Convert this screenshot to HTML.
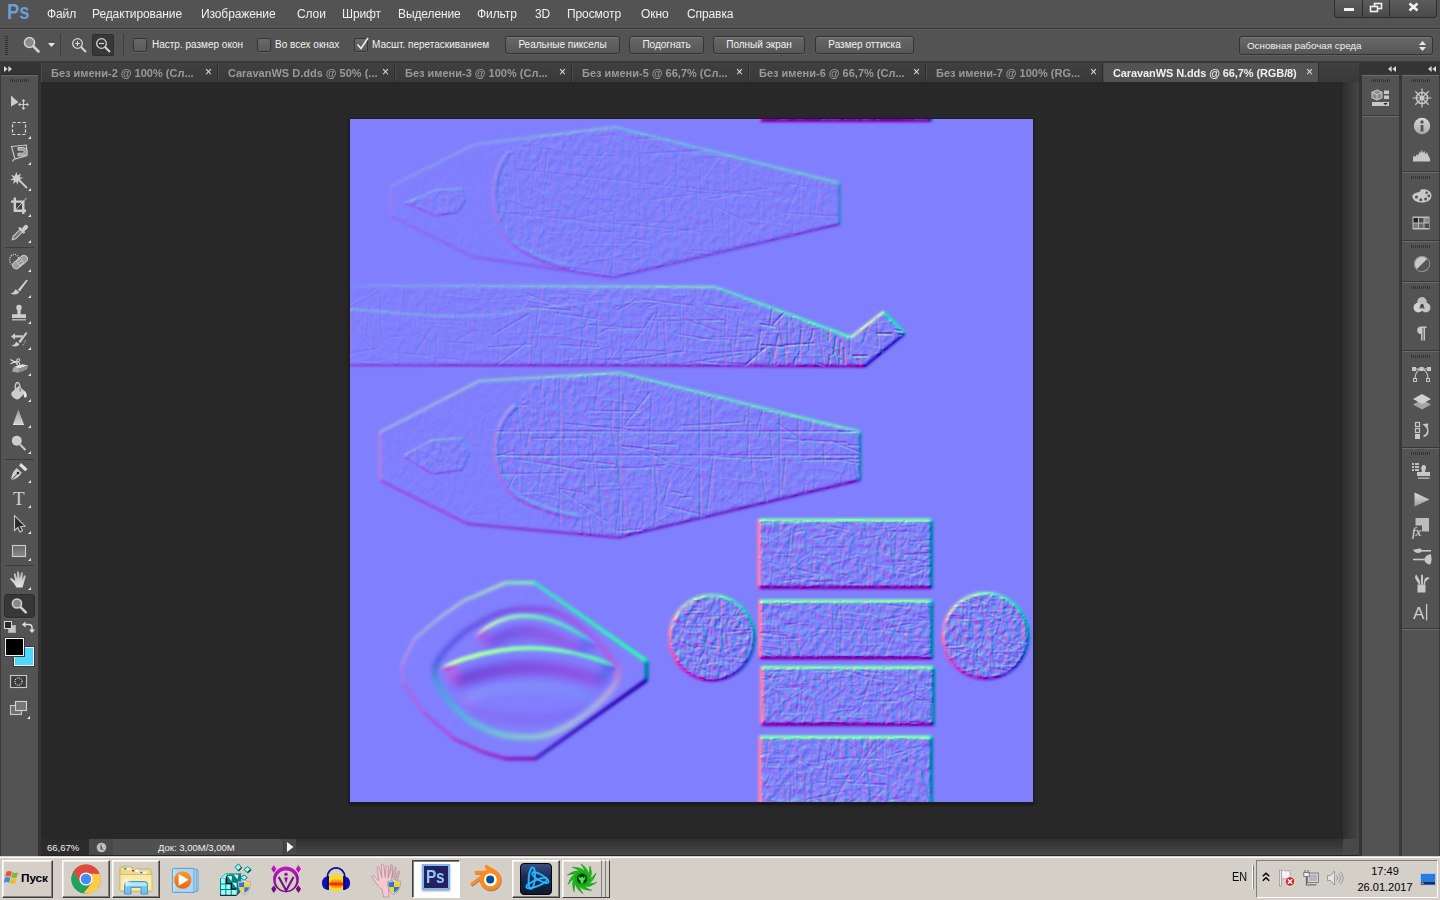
<!DOCTYPE html>
<html lang="ru">
<head>
<meta charset="utf-8">
<title>CaravanWS N.dds @ 66,7% (RGB/8)</title>
<style>
*{box-sizing:border-box;margin:0;padding:0}
html,body{width:1440px;height:900px;overflow:hidden;background:#282828}
body{position:relative;font-family:"Liberation Sans","DejaVu Sans",sans-serif;font-size:11px;color:#e0e0e0;-webkit-font-smoothing:antialiased}
.abs{position:absolute}
/* ---------- menu bar ---------- */
#menubar{position:absolute;left:0;top:0;width:1440px;height:28px;background:#535353}
#menubar .mi{filter:grayscale(1);position:absolute;top:6px;font-size:12px;letter-spacing:-.1px;line-height:16px;color:#f0f0f0;white-space:nowrap}
#pslogo{position:absolute;left:7px;top:-1px;font-size:22px;line-height:26px;font-weight:bold;color:#6c9fd6;transform:scaleX(.84);transform-origin:0 0}
#winctl{position:absolute;left:1334px;top:-1px;width:103px;height:19px;border:1px solid #2d2d2d;border-top:none;border-radius:0 0 4px 4px;background:linear-gradient(#5d5d5d,#4a4a4a)}
#winctl i{position:absolute;top:0;width:1px;height:18px;background:#2d2d2d}
/* ---------- options bar ---------- */
#sep1{position:absolute;left:0;top:28px;width:1440px;height:1px;background:#383838}
#optbar{position:absolute;left:0;top:29px;width:1440px;height:33px;background:#535353;border-top:1px solid #5e5e5e}
#sep2{position:absolute;left:0;top:61px;width:1440px;height:2px;background:#383838}
.cb{position:absolute;top:38px;width:14px;height:14px;border:1px solid #343434;border-radius:2px;background:linear-gradient(#6a6a6a,#595959);box-shadow:0 1px 0 #626262}
.ol{position:absolute;top:38px;font-size:10px;line-height:14px;color:#f2f2f2;white-space:nowrap}
.btn{position:absolute;top:36px;height:18px;border:1px solid #333;border-radius:3px;background:linear-gradient(#686868,#565656);box-shadow:0 1px 0 #5f5f5f, inset 0 1px 0 #777;font-size:10px;line-height:16px;color:#f2f2f2;text-align:center;white-space:nowrap}
/* ---------- tabs ---------- */
#tabbar{position:absolute;left:41px;top:63px;width:1318px;height:19px;background:linear-gradient(#404040,#393939)}
.tab{position:absolute;top:0;height:19px;width:177px;border-right:1px solid #2c2c2c;border-left:1px solid #4a4a4a;font-weight:bold;font-size:11px;line-height:19px;color:#999;white-space:nowrap}
.tab span{filter:grayscale(1);position:absolute;left:9px;top:1px}
.tab b{position:absolute;right:5px;top:0;font-size:12px;color:#e4e4e4;font-weight:normal;filter:grayscale(1)}
.tab.act{background:#535353;color:#f0f0f0;width:216px;letter-spacing:-.1px}
/* ---------- left toolbar ---------- */
#tbhead{position:absolute;left:0;top:63px;width:38px;height:11px;background:#343434}
#toolbar{position:absolute;left:0;top:75px;width:38px;height:781px;background:#535353;border-top:1px solid #6a6a6a}
#tbsep{position:absolute;left:38px;top:63px;width:3px;height:793px;background:#343434}
/* ---------- canvas ---------- */
#canvas{position:absolute;left:41px;top:82px;width:1318px;height:757px;background:#282828}
#vscroll{position:absolute;left:1343px;top:82px;width:16px;height:757px;background:linear-gradient(90deg,#2e2e2e,#464646)}
#statusbar{position:absolute;left:41px;top:839px;width:1318px;height:17px;background:linear-gradient(#2f2f2f,#474747 16px,#222 16px)}
/* ---------- right dock ---------- */
#docksep{position:absolute;left:1359px;top:63px;width:3px;height:793px;background:#343434}
#dockhead{position:absolute;left:1362px;top:63px;width:78px;height:11px;background:#343434}
#dock{position:absolute;left:1362px;top:74px;width:78px;height:782px;background:#383838}
.pn{position:absolute;background:#535353;border-top:1px solid #6a6a6a}
/* ---------- taskbar ---------- */
#taskbar{position:absolute;left:0;top:856px;width:1440px;height:44px;background:#d4d0c8;color:#000}

#taskbar .b3{position:absolute;top:4px;height:38px;width:48px;border:1px solid;border-color:#fff #404040 #404040 #fff;box-shadow:inset -1px -1px 0 #808080,inset 1px 1px 0 #ece9e2}
#taskbar .b3.dn{background:#fff;border-color:#404040 #fff #fff #404040;box-shadow:inset 1px 1px 0 #808080}
#taskbar svg{position:absolute}
</style>
</head>
<body>
<div id="menubar">
<div id="pslogo">Ps</div>
<div class="mi" style="left:47px">Файл</div>
<div class="mi" style="left:92px">Редактирование</div>
<div class="mi" style="left:201px">Изображение</div>
<div class="mi" style="left:297px">Слои</div>
<div class="mi" style="left:342px">Шрифт</div>
<div class="mi" style="left:398px">Выделение</div>
<div class="mi" style="left:477px">Фильтр</div>
<div class="mi" style="left:535px">3D</div>
<div class="mi" style="left:567px">Просмотр</div>
<div class="mi" style="left:641px">Окно</div>
<div class="mi" style="left:687px">Справка</div>
<div id="winctl"><i style="left:27px"></i><i style="left:54px"></i>
<svg class="abs" style="left:0;top:0" width="101" height="18" viewBox="0 0 101 18">
<rect x="9" y="9" width="10" height="3" fill="#f2f2f2"/>
<rect x="39.5" y="4.5" width="7" height="5" fill="none" stroke="#f2f2f2" stroke-width="1.6"/>
<rect x="35.5" y="7.5" width="7" height="5" fill="#555" stroke="#f2f2f2" stroke-width="1.6"/>
<path d="M74.5 4.5l8 7M82.5 4.5l-8 7" stroke="#f2f2f2" stroke-width="2.6" fill="none"/>
</svg></div>
</div><div id="sep1"></div>
<div id="optbar"></div><div id="sep2"></div>
<div class="abs" style="left:5px;top:36px;width:3px;height:19px;background:repeating-linear-gradient(#333 0,#333 1px,transparent 1px,transparent 2px)"></div>
<svg class="abs" style="left:22px;top:35px" width="20" height="20" viewBox="0 0 20 20"><circle cx="7.5" cy="7.5" r="5" fill="#8a8a8a" stroke="#d0d0d0" stroke-width="1.6"/><path d="M11.5 11.5l5 5" stroke="#cfcfcf" stroke-width="2.6" stroke-linecap="round"/></svg>
<svg class="abs" style="left:48px;top:43px" width="7" height="4"><path d="M0 0h7l-3.5 4z" fill="#e8e8e8"/></svg>
<div class="abs" style="left:60px;top:34px;width:1px;height:23px;background:#3e3e3e"></div>
<div class="abs" style="left:92px;top:34px;width:22px;height:22px;background:#383838;border:1px solid #2e2e2e;border-radius:2px"></div>
<svg class="abs" style="left:70px;top:36px" width="20" height="20" viewBox="0 0 20 20"><circle cx="7.5" cy="7.5" r="4.8" fill="none" stroke="#d6d6d6" stroke-width="1.3"/><path d="M5 7.5h5M7.5 5v5" stroke="#d6d6d6" stroke-width="1.2"/><path d="M11 11l5 5" stroke="#d6d6d6" stroke-width="2"/></svg>
<svg class="abs" style="left:94px;top:36px" width="20" height="20" viewBox="0 0 20 20"><circle cx="7.5" cy="7.5" r="4.8" fill="none" stroke="#d6d6d6" stroke-width="1.3"/><path d="M5 7.5h5" stroke="#d6d6d6" stroke-width="1.2"/><path d="M11 11l5 5" stroke="#d6d6d6" stroke-width="2"/></svg>
<div class="abs" style="left:123px;top:34px;width:1px;height:23px;background:#3e3e3e"></div>
<div class="cb" style="left:133px"></div><div class="ol" style="left:152px">Настр. размер окон</div>
<div class="cb" style="left:257px"></div><div class="ol" style="left:275px">Во всех окнах</div>
<div class="cb" style="left:354px"></div><svg class="abs" style="left:355px;top:36px" width="16" height="16" viewBox="0 0 16 16"><path d="M2.5 8.5l3.5 4 7-10.5" fill="none" stroke="#f0f0f0" stroke-width="1.6"/></svg><div class="ol" style="left:372px">Масшт. перетаскиванием</div>
<div class="btn" style="left:505px;width:115px">Реальные пикселы</div>
<div class="btn" style="left:629px;width:75px">Подогнать</div>
<div class="btn" style="left:713px;width:92px">Полный экран</div>
<div class="btn" style="left:815px;width:99px">Размер оттиска</div>
<div class="btn" style="left:1239px;top:36px;width:194px;height:19px;text-align:left;padding-left:7px;line-height:17px;font-size:9.800px">Основная рабочая среда<svg class="abs" style="right:6px;top:4px" width="7" height="10"><path d="M0 4l3.5-4 3.5 4zM0 6l3.5 4 3.5-4z" fill="#e8e8e8"/></svg></div>
<div id="tabbar">
<div class="tab" style="left:0px"><span>Без имени-2 @ 100% (Сл...</span><b>×</b></div>
<div class="tab" style="left:177px"><span>CaravanWS D.dds @ 50% (...</span><b>×</b></div>
<div class="tab" style="left:354px"><span>Без имени-3 @ 100% (Сл...</span><b>×</b></div>
<div class="tab" style="left:531px"><span>Без имени-5 @ 66,7% (Сл...</span><b>×</b></div>
<div class="tab" style="left:708px"><span>Без имени-6 @ 66,7% (Сл...</span><b>×</b></div>
<div class="tab" style="left:885px"><span>Без имени-7 @ 100% (RG...</span><b>×</b></div>
<div class="tab act" style="left:1062px"><span>CaravanWS N.dds @ 66,7% (RGB/8)</span><b>×</b></div>
</div>
<div id="tbhead"><svg class="abs" style="left:4px;top:3px" width="9" height="6"><path d="M0 0l3.6 3-3.6 3zM4.4 0l3.6 3-3.6 3z" fill="#d8d8d8"/></svg></div>
<div class="abs" style="left:0;top:63px;width:1px;height:793px;background:#3a3a3a;z-index:2"></div>
<div id="toolbar"></div><div id="tbsep"></div>
<div class="abs" style="left:10px;top:79px;width:19px;height:3px;background:repeating-linear-gradient(90deg,#353535 0,#353535 1px,transparent 1px,transparent 2px)"></div>
<svg class="abs" style="left:6px;top:90px" width="28" height="26" viewBox="0 0 28 26"><path d="M5 5.5v11l7.5-4.3z" fill="#cdcdcd"/><path d="M17.5 10v9M13 14.5h9" stroke="#cdcdcd" stroke-width="1.2"/><path d="M17.5 9l2 2.3h-4zM17.5 20l2-2.3h-4zM12 14.5l2.3-2v4zM23 14.5l-2.3-2v4z" fill="#cdcdcd"/></svg>
<svg class="abs" style="left:6px;top:116px" width="28" height="26" viewBox="0 0 28 26"><rect x="6.5" y="6.5" width="13" height="12" fill="none" stroke="#d8d8d8" stroke-width="1.2" stroke-dasharray="3.2 1.8"/><path d="M25 20v3h-3z" fill="#e6e6e6"/></svg>
<svg class="abs" style="left:6px;top:142px" width="28" height="26" viewBox="0 0 28 26"><path d="M5.5 4.5l15 -1.5 0.5 10.5-12 3.5z" fill="none" stroke="#cdcdcd" stroke-width="1.1"/><path d="M8 17l-1.5 2.5" stroke="#cdcdcd" stroke-width="1.1"/><path d="M12 5.5h5a4.2 4.2 0 0 1 0 8.4h-5v-2.6h4.6a1.6 1.6 0 0 0 0-3.2H12z" fill="#9a9a9a" stroke="#cdcdcd" stroke-width="1"/><path d="M25 20v3h-3z" fill="#e6e6e6"/></svg>
<svg class="abs" style="left:6px;top:168px" width="28" height="26" viewBox="0 0 28 26"><path d="M10.5 4l1.2 3.6 3.4-2-1.6 3.6 3.8.6-3.6 1.6 2 3.2-3.6-1.4-.4 3.8-1.8-3.4-3 2.4 1-3.8-3.8-.2 3.4-2-2.6-3 3.8 1z" fill="#cdcdcd"/><path d="M13.5 12.5l7.5 7.5" stroke="#cdcdcd" stroke-width="1.8"/><path d="M25 20v3h-3z" fill="#e6e6e6"/></svg>
<svg class="abs" style="left:6px;top:194px" width="28" height="26" viewBox="0 0 28 26"><path d="M8.800 3.500v13.300h11.200M5 7.600h12.300v12.400" fill="none" stroke="#cdcdcd" stroke-width="2.400"/><rect x="10.500" y="9.300" width="5" height="5.500" fill="#3a3a3a"/><path d="M9.5 16l11-12" stroke="#cdcdcd" stroke-width="1"/><path d="M25 20v3h-3z" fill="#e6e6e6"/></svg>
<svg class="abs" style="left:6px;top:220px" width="28" height="26" viewBox="0 0 28 26"><path d="M6.2 19.8l1-3.4 7.2-7.2 2.4 2.4-7.2 7.2z" fill="#777" stroke="#cdcdcd" stroke-width="1.1"/><path d="M13 7.5l5.5 5.5" stroke="#cdcdcd" stroke-width="2.2"/><path d="M15.5 9l3-3.4a2 2 0 0 1 3 2.9l-3.4 3z" fill="#cdcdcd"/><path d="M25 20v3h-3z" fill="#e6e6e6"/></svg>
<div class="abs" style="left:5px;top:247px;width:29px;height:1px;background:#3c3c3c"></div>
<svg class="abs" style="left:6px;top:249px" width="28" height="26" viewBox="0 0 28 26"><ellipse cx="8.3" cy="11" rx="4.6" ry="5.6" fill="none" stroke="#e0e0e0" stroke-width="1.2" stroke-dasharray="1 1.2"/><g transform="rotate(-40 14 13)"><rect x="5.5" y="9.6" width="17" height="7" rx="3.5" fill="#9c9c9c" stroke="#cdcdcd" stroke-width="1"/><rect x="11" y="10" width="6" height="6.2" fill="#c4c4c4"/><path d="M12.5 11.7h.1M14 11.7h.1M15.5 11.7h.1M12.5 14.3h.1M14 14.3h.1M15.5 14.3h.1" stroke="#333" stroke-width="1" stroke-linecap="round"/></g><path d="M25 20v3h-3z" fill="#e6e6e6"/></svg>
<svg class="abs" style="left:6px;top:275px" width="28" height="26" viewBox="0 0 28 26"><path d="M20.5 4.5l1.3 1-8 11-2-1.5z" fill="#cdcdcd"/><path d="M4 18.5c3 0 4-1.5 5.5-4.2l3.6 2.6c-1 2.6-4.5 3.2-9.1 1.6z" fill="#cdcdcd"/><path d="M25 20v3h-3z" fill="#e6e6e6"/></svg>
<svg class="abs" style="left:6px;top:301px" width="28" height="26" viewBox="0 0 28 26"><path d="M10.2 6.6a2.8 2.8 0 1 1 5.6 0c0 1.6-1.2 2.2-1.2 3.6v3h5.400v3.800h-14v-3.800h5.400v-3c0-1.400-1.200-2-1.200-3.600z" fill="#cdcdcd"/><rect x="6" y="18.200" width="14" height="1.200" fill="#cdcdcd"/><path d="M25 20v3h-3z" fill="#e6e6e6"/></svg>
<svg class="abs" style="left:6px;top:327px" width="28" height="26" viewBox="0 0 28 26"><path d="M20 5l1.400 1-7 10-2-1.400z" fill="#cdcdcd"/><path d="M5 18.500c2.600 0 3.800-1.300 5.200-3.800l3.300 2.400c-1 2.400-4.300 3-8.500 1.400z" fill="#cdcdcd"/><path d="M5 9.500l4-3.500v2.200h7.500v2.200H9v2.300z" fill="#cdcdcd"/><path d="M19.500 13.500l-3 5.500" stroke="#cdcdcd" stroke-width="1.100" stroke-dasharray="1 1.200"/><path d="M25 20v3h-3z" fill="#e6e6e6"/></svg>
<svg class="abs" style="left:6px;top:353px" width="28" height="26" viewBox="0 0 28 26"><path d="M7.500 14l9-2.800 5.800 1.300-9 3z" fill="#e0e0e0"/><path d="M7.500 14l5.800 1.500-.8 4.300-6.300-1.300z" fill="#a8a8a8"/><path d="M13.300 15.500l9-3-1.200 4-8.600 3.300z" fill="#8e8e8e"/><circle cx="12.300" cy="7.200" r="1.500" fill="none" stroke="#e8e8e8" stroke-width="1"/><circle cx="12.300" cy="11" r="1.500" fill="none" stroke="#e8e8e8" stroke-width="1"/><path d="M11 8l-6.500 2.800M11 10.200L4.500 6.500" stroke="#e8e8e8" stroke-width="1.200"/><path d="M25 20v3h-3z" fill="#e6e6e6"/></svg>
<svg class="abs" style="left:6px;top:379px" width="28" height="26" viewBox="0 0 28 26"><path d="M5.500 13.500l7-6.500 7.500 6-6.500 6.500c-1.500 1.300-3.600 1.300-5.600-.4s-3.400-4-2.400-5.600z" fill="#cdcdcd"/><path d="M9.500 10.500c-.8-4 .4-7 2-7s2.500 2.500 2.800 6.500" fill="none" stroke="#cdcdcd" stroke-width="1.300"/><path d="M14 9.500l.3 3" stroke="#666" stroke-width="1"/><path d="M18.500 12.500c1.800.8 2.300 2.600 2.300 4.500a1.500 1.500 0 0 1-3 0c0-1.400.5-2.400-.6-3.400z" fill="#e4e4e4"/><path d="M25 20v3h-3z" fill="#e6e6e6"/></svg>
<svg class="abs" style="left:6px;top:405px" width="28" height="26" viewBox="0 0 28 26"><defs><linearGradient id="gtri" x1="0" y1="0" x2="0" y2="1"><stop offset="0" stop-color="#999"/><stop offset="1" stop-color="#d4d4d4"/></linearGradient></defs><path d="M12.300 4.500l5.700 15h-11z" fill="url(#gtri)"/><rect x="7" y="19" width="11" height="1" fill="#e0e0e0"/><path d="M25 20v3h-3z" fill="#e6e6e6"/></svg>
<svg class="abs" style="left:6px;top:431px" width="28" height="26" viewBox="0 0 28 26"><circle cx="10.800" cy="9.800" r="5" fill="#cdcdcd"/><path d="M14 13.500l5.500 5.500" stroke="#cdcdcd" stroke-width="2"/><path d="M25 20v3h-3z" fill="#e6e6e6"/></svg>
<div class="abs" style="left:5px;top:459px;width:29px;height:1px;background:#3c3c3c"></div>
<svg class="abs" style="left:6px;top:460px" width="28" height="26" viewBox="0 0 28 26"><path d="M5 20.500c.3-5.500 2-9.500 5.800-12.500l5 4.800c-2.500 4-6 6.500-10.800 7.700z" fill="#cdcdcd"/><path d="M5 20.500l6.500-7" stroke="#444" stroke-width="1"/><circle cx="12" cy="13" r="1.300" fill="#222"/><path d="M13 5.500l2-2.500 6.500 6-2.300 2.300z" fill="#e2e2e2"/><path d="M25 20v3h-3z" fill="#e6e6e6"/></svg>
<svg class="abs" style="left:6px;top:485px" width="28" height="26" viewBox="0 0 28 26"><text x="12.800" y="20" font-family="Liberation Serif,serif" font-size="19" fill="#d2d2d2" text-anchor="middle">T</text><path d="M25 20v3h-3z" fill="#e6e6e6"/></svg>
<svg class="abs" style="left:6px;top:511px" width="28" height="26" viewBox="0 0 28 26"><path d="M8.500 4.500v15l3.400-3 2 4.500 2.600-1.200-2-4.400 4.500-.2z" fill="#2a2a2a" stroke="#c8c8c8" stroke-width="1.100"/><path d="M25 20v3h-3z" fill="#e6e6e6"/></svg>
<svg class="abs" style="left:6px;top:538px" width="28" height="26" viewBox="0 0 28 26"><defs><linearGradient id="grect" x1="0" y1="0" x2="0" y2="1"><stop offset="0" stop-color="#666"/><stop offset="1" stop-color="#8a8a8a"/></linearGradient></defs><rect x="6.500" y="7.500" width="13" height="11" fill="url(#grect)" stroke="#cfcfcf" stroke-width="1.100"/><path d="M25 20v3h-3z" fill="#e6e6e6"/></svg>
<div class="abs" style="left:5px;top:565px;width:29px;height:1px;background:#3c3c3c"></div>
<svg class="abs" style="left:6px;top:567px" width="28" height="26" viewBox="0 0 28 26"><defs><linearGradient id="ghand" x1="0" y1="0" x2="0" y2="1"><stop offset="0" stop-color="#b0b0b0"/><stop offset="1" stop-color="#e6e6e6"/></linearGradient></defs><path d="M10.500 20.500l-2.500-4-3.700-4c-.6-1 .6-1.800 1.600-1.200l3.300 2.600-1.400-6.600c-.2-1.300 1.500-1.600 1.900-.4l1.400 5-.1-6.600c0-1.300 1.900-1.300 2.100 0l.6 6.400 1.300-5.600c.3-1.200 2-.9 1.900.3l-.7 6.300 1.800-3.800c.5-1 1.900-.5 1.700.6l-1.700 6-1.500 5z" fill="url(#ghand)"/><path d="M25 20v3h-3z" fill="#e6e6e6"/></svg>
<div class="abs" style="left:4px;top:594px;width:31px;height:24px;background:#373737;border:1px solid #2c2c2c;border-radius:3px;box-shadow:0 1px 0 #5e5e5e"></div>
<svg class="abs" style="left:6px;top:593px" width="28" height="26" viewBox="0 0 28 26"><circle cx="11" cy="10.500" r="4.600" fill="#8a8a8a" stroke="#d0d0d0" stroke-width="1.500"/><path d="M14.800 14.300l5 5" stroke="#cfcfcf" stroke-width="2.600" stroke-linecap="round"/></svg>
<svg class="abs" style="left:3px;top:620px" width="34" height="14" viewBox="0 0 34 14"><rect x="5.500" y="5.500" width="7" height="7" fill="#c4c4c4" stroke="#aaa"/><rect x="1.500" y="1.500" width="7" height="7" fill="#2a2a2a" stroke="#d8d8d8"/><path d="M21.500 4.500h4.500a3 3 0 0 1 3 3v3" fill="none" stroke="#e0e0e0" stroke-width="1.400"/><path d="M19 4.500l3.500-3v6zM29 13l-3-3.500h6z" fill="#e0e0e0"/></svg>
<div class="abs" style="left:14px;top:647px;width:20px;height:19px;background:#4fd8ff;border:1px solid #f4f4f4;outline:1px solid #3a3a3a"></div>
<div class="abs" style="left:5px;top:638px;width:19px;height:18px;background:#000;border:1px solid #f4f4f4;outline:1px solid #3a3a3a"></div>
<svg class="abs" style="left:9px;top:674px" width="20" height="16" viewBox="0 0 20 16"><rect x="1.500" y="1.500" width="16" height="12" fill="#3c3c3c" stroke="#c8c8c8" stroke-width="1.100"/><circle cx="9.500" cy="7.500" r="3.600" fill="none" stroke="#e8e8e8" stroke-width="1.100" stroke-dasharray="1 1.100"/></svg>
<svg class="abs" style="left:9px;top:700px" width="24" height="22" viewBox="0 0 24 22"><rect x="1.500" y="5.500" width="11" height="9" fill="#6e6e6e" stroke="#c8c8c8" stroke-width="1.100"/><rect x="6.500" y="1.500" width="11" height="9" fill="#777" stroke="#d4d4d4" stroke-width="1.100"/><path d="M21 16v3h-3z" fill="#e6e6e6"/></svg>
<div id="canvas"></div>
<div id="vscroll"></div><div class="abs" style="left:1343px;top:839px;width:16px;height:16px;background:#484848;z-index:3"></div>
<div class="abs" style="left:349px;top:118px;width:685px;height:685px;background:#1c1c18;box-shadow:0 2px 3px rgba(0,0,0,.45)"></div>
<div id="nmap" class="abs" style="left:350px;top:119px;width:683px;height:683px;background:#8080ff;overflow:hidden">
<!--NMAP_S--><svg width="683" height="683" viewBox="350 119 683 683" style="position:absolute;left:0;top:0">
<defs>
<filter id="soft1" x="-5%" y="-5%" width="110%" height="110%" color-interpolation-filters="sRGB"><feGaussianBlur stdDeviation="1.6"/></filter>
<filter id="soft2" x="-5%" y="-5%" width="110%" height="110%" color-interpolation-filters="sRGB"><feGaussianBlur stdDeviation="2.2"/></filter>
<filter id="soft3" x="-5%" y="-5%" width="110%" height="110%" color-interpolation-filters="sRGB"><feGaussianBlur stdDeviation="1.3"/></filter>
<filter id="texf" x="0" y="0" width="100%" height="100%" color-interpolation-filters="sRGB">
<feTurbulence type="fractalNoise" baseFrequency="0.17 0.13" numOctaves="2" seed="4" result="t"/>
<feColorMatrix in="t" type="matrix" values="0 0 0 0 1  0 0 0 0 1  0 0 0 0 1  2.2 0 0 0 -0.75" result="tw"/>
<feComposite in="tw" in2="SourceAlpha" operator="in"/>
</filter>
<filter id="nm" x="0" y="0" width="100%" height="100%" color-interpolation-filters="sRGB">
<feConvolveMatrix in="SourceGraphic" order="3" kernelMatrix="1 0 -1 2 0 -2 1 0 -1" divisor="2.8" bias="0.5" preserveAlpha="true" edgeMode="duplicate" result="cx"/>
<feConvolveMatrix in="SourceGraphic" order="3" kernelMatrix="1 2 1 0 0 0 -1 -2 -1" divisor="2.8" bias="0.5" preserveAlpha="true" edgeMode="duplicate" result="cy"/>
<feComponentTransfer in="cx" result="ax"><feFuncR type="table" tableValues="1 0 1"/><feFuncG type="table" tableValues="1 0 1"/><feFuncB type="table" tableValues="1 0 1"/></feComponentTransfer>
<feComponentTransfer in="cy" result="ay"><feFuncR type="table" tableValues="1 0 1"/><feFuncG type="table" tableValues="1 0 1"/><feFuncB type="table" tableValues="1 0 1"/></feComponentTransfer>
<feBlend in="ax" in2="ay" mode="lighten" result="am"/>
<feColorMatrix in="am" type="matrix" values="0 0 0 0 0  0 0 0 0 0  0 0 0.32 0 0  0 0 0 0 1" result="bb"/>
<feColorMatrix in="cx" type="matrix" values="1 0 0 0 0  0 0 0 0 0  0 0 0 0 0  0 0 0 0 1" result="rr"/>
<feColorMatrix in="cy" type="matrix" values="0 0 0 0 0  0 1 0 0 0  0 0 0 0 0  0 0 0 0 1" result="gg"/>
<feBlend in="rr" in2="gg" mode="lighten" result="rg"/>
<feBlend in="rg" in2="bb" mode="lighten" result="rgb"/>
<feComponentTransfer in="rgb" result="fin"><feFuncB type="linear" slope="-1" intercept="1"/></feComponentTransfer>
<feGaussianBlur in="fin" stdDeviation="0.55"/>
</filter>
<filter id="nm2" x="0" y="0" width="100%" height="100%" color-interpolation-filters="sRGB">
<feConvolveMatrix in="SourceGraphic" order="3" kernelMatrix="1 0 -1 2 0 -2 1 0 -1" divisor="1.5" bias="0.5" preserveAlpha="true" edgeMode="duplicate" result="cx"/>
<feConvolveMatrix in="SourceGraphic" order="3" kernelMatrix="1 2 1 0 0 0 -1 -2 -1" divisor="1.5" bias="0.5" preserveAlpha="true" edgeMode="duplicate" result="cy"/>
<feComponentTransfer in="cx" result="ax"><feFuncR type="table" tableValues="1 0 1"/><feFuncG type="table" tableValues="1 0 1"/><feFuncB type="table" tableValues="1 0 1"/></feComponentTransfer>
<feComponentTransfer in="cy" result="ay"><feFuncR type="table" tableValues="1 0 1"/><feFuncG type="table" tableValues="1 0 1"/><feFuncB type="table" tableValues="1 0 1"/></feComponentTransfer>
<feBlend in="ax" in2="ay" mode="lighten" result="am"/>
<feColorMatrix in="am" type="matrix" values="0 0 0 0 0  0 0 0 0 0  0 0 0.32 0 0  0 0 0 0 1" result="bb"/>
<feColorMatrix in="cx" type="matrix" values="1 0 0 0 0  0 0 0 0 0  0 0 0 0 0  0 0 0 0 1" result="rr"/>
<feColorMatrix in="cy" type="matrix" values="0 0 0 0 0  0 1 0 0 0  0 0 0 0 0  0 0 0 0 1" result="gg"/>
<feBlend in="rr" in2="gg" mode="lighten" result="rg"/>
<feBlend in="rg" in2="bb" mode="lighten" result="rgb"/>
<feComponentTransfer in="rgb" result="fin"><feFuncB type="linear" slope="-1" intercept="1"/></feComponentTransfer>
<feGaussianBlur in="fin" stdDeviation="0.8"/>
</filter>
<linearGradient id="g4rim" gradientUnits="userSpaceOnUse" x1="400" y1="0" x2="647" y2="0"><stop offset="0" stop-color="#6a6a6a"/><stop offset="1" stop-color="#cccccc"/></linearGradient>
<linearGradient id="g4ra" gradientUnits="userSpaceOnUse" x1="0" y1="642" x2="0" y2="700"><stop offset="0" stop-color="#fff" stop-opacity=".5"/><stop offset="1" stop-color="#fff" stop-opacity="0"/></linearGradient>
<linearGradient id="g4rb" gradientUnits="userSpaceOnUse" x1="0" y1="612" x2="0" y2="655"><stop offset="0" stop-color="#fff" stop-opacity=".4"/><stop offset="1" stop-color="#fff" stop-opacity="0"/></linearGradient>
<filter id="soft4" filterUnits="userSpaceOnUse" x="376" y="560" width="300" height="222" color-interpolation-filters="sRGB"><feGaussianBlur stdDeviation="1.7"/></filter>
<filter id="soft5" filterUnits="userSpaceOnUse" x="376" y="560" width="300" height="222" color-interpolation-filters="sRGB"><feGaussianBlur stdDeviation="2.6"/></filter>
<filter id="soft7" filterUnits="userSpaceOnUse" x="376" y="560" width="300" height="222" color-interpolation-filters="sRGB"><feGaussianBlur stdDeviation="5"/></filter>
<linearGradient id="g4bowl" gradientUnits="userSpaceOnUse" x1="0" y1="609" x2="0" y2="737"><stop offset="0" stop-color="#5c5c5c"/><stop offset="1" stop-color="#363636"/></linearGradient>
<filter id="soft8" filterUnits="userSpaceOnUse" x="376" y="560" width="300" height="222" color-interpolation-filters="sRGB"><feGaussianBlur stdDeviation="6"/></filter>
<clipPath id="cpRA"><path d="M441 668Q528 629.6 616 667L620 730H436Z"/></clipPath>
<clipPath id="cpRB"><path d="M475 637Q524.5 591.5 597 646L600 690H470Z"/></clipPath>
<linearGradient id="g4bowl2" gradientUnits="userSpaceOnUse" x1="455" y1="725" x2="600" y2="620"><stop offset="0" stop-color="#2e2e2e"/><stop offset="1" stop-color="#868686"/></linearGradient>
<filter id="soft6" filterUnits="userSpaceOnUse" x="376" y="560" width="300" height="222" color-interpolation-filters="sRGB"><feGaussianBlur stdDeviation="1.8"/></filter>
<linearGradient id="gh1" gradientUnits="userSpaceOnUse" x1="391" y1="0" x2="840" y2="0"><stop offset="0" stop-color="#fff" stop-opacity=".08"/><stop offset="1" stop-color="#fff" stop-opacity=".27"/></linearGradient>
<linearGradient id="gh2" gradientUnits="userSpaceOnUse" x1="380" y1="0" x2="860" y2="0"><stop offset="0" stop-color="#fff" stop-opacity=".2"/><stop offset="1" stop-color="#fff" stop-opacity=".44"/></linearGradient>
<linearGradient id="gst" gradientUnits="userSpaceOnUse" x1="350" y1="0" x2="870" y2="0"><stop offset="0" stop-color="#fff" stop-opacity=".03"/><stop offset=".18" stop-color="#fff" stop-opacity=".13"/><stop offset=".7" stop-color="#fff" stop-opacity=".32"/><stop offset="1" stop-color="#fff" stop-opacity=".6"/></linearGradient>
<linearGradient id="gstt" gradientUnits="userSpaceOnUse" x1="350" y1="0" x2="870" y2="0"><stop offset="0" stop-color="#000" stop-opacity=".03"/><stop offset=".7" stop-color="#000" stop-opacity=".15"/><stop offset="1" stop-color="#000" stop-opacity=".3"/></linearGradient>
<linearGradient id="gsi" gradientUnits="userSpaceOnUse" x1="350" y1="0" x2="640" y2="0"><stop offset="0" stop-color="#fff" stop-opacity=".16"/><stop offset=".7" stop-color="#fff" stop-opacity=".12"/><stop offset="1" stop-color="#fff" stop-opacity="0"/></linearGradient>
<linearGradient id="ga1" gradientUnits="userSpaceOnUse" x1="492" y1="0" x2="600" y2="0"><stop offset="0" stop-color="#fff" stop-opacity=".13"/><stop offset="1" stop-color="#fff" stop-opacity="0"/></linearGradient>
<linearGradient id="ga2" gradientUnits="userSpaceOnUse" x1="492" y1="0" x2="610" y2="0"><stop offset="0" stop-color="#fff" stop-opacity=".17"/><stop offset="1" stop-color="#fff" stop-opacity="0"/></linearGradient>
<clipPath id="cp4"><rect x="386" y="570" width="280" height="202"/></clipPath>
<clipPath id="cpBowl"><path d="M434.5 668C438 656 458 634 479 623C496 613 510 609 524 609C534 609 544 609 551 610.5C566 616 578 624 588 633.5C600 644 610 656 615 665C618 669 618.5 676 615 684.5C608 694 600 703 588 711.5C576 721 564 729 551 733.5C542 736.5 534 737.5 524 737C512 737 500 735 490 731C476 725 464 717 453.5 706.5C445 697 438 686 435 677Z"/></clipPath>
<clipPath id="cpBody"><path d="M540 136.5L615 127 839.5 183V224L613 277.5 568 271C540 262 525 254 514 244C488 216 490 176 509 153C518 146 528 140 540 136.5Z"/><path d="M540 377.5L620 373 860 432V480L618 537.5 580 534C560 524 535 510 516 496C489 470 492 428 514 407C522 396 530 386 540 377.5Z"/></clipPath>
<clipPath id="cpTex">
<rect x="759" y="520" width="172.5" height="67.5"/>
<rect x="760" y="601" width="172" height="57"/>
<rect x="761.5" y="667.5" width="172" height="57"/>
<rect x="760" y="737" width="171.5" height="80"/>
<rect x="760" y="60" width="171" height="60.5"/>
<circle cx="712" cy="637.8" r="42.7"/>
<circle cx="985.7" cy="636" r="43"/>
<polygon points="380,432 479,381 620,373 860,432 860,480 618,537.5 468,524 380,480.5"/><polygon points="349,285.5 715.5,287 851,337.5 883.5,312 904.5,333.5 865,366 349,364.5"/><polygon points="391,186 474,144.5 615,127 839.5,183 839.5,224 613,277.5 474,257 391,216"/>
</clipPath></defs>
<g filter="url(#nm)">
<rect x="340" y="100" width="710" height="720" fill="#000"/>
<g filter="url(#soft1)" fill="#fff">
<rect x="759" y="520" width="172.5" height="67.5" fill-opacity=".6"/>
<rect x="760" y="601" width="172" height="57" fill-opacity=".6"/>
<rect x="761.5" y="667.5" width="172" height="57" fill-opacity=".6"/>
<rect x="760" y="737" width="171.5" height="80" fill-opacity=".6"/>
<rect x="760" y="60" width="171" height="60.5" fill-opacity=".6"/>
<circle cx="712" cy="637.8" r="42.7" fill-opacity=".42"/>
<circle cx="985.7" cy="636" r="43" fill-opacity=".42"/>
<polygon points="380,432 479,381 620,373 860,432 860,480 618,537.5 468,524 380,480.5" fill="url(#gh2)"/>
<polygon points="349,285.5 715.5,287 851,337.5 883.5,312 904.5,333.5 865,366 349,364.5" fill="url(#gst)"/>
<polygon points="391,186 474,144.5 615,127 839.5,183 839.5,224 613,277.5 474,257 391,216" fill="url(#gh1)"/>
</g>
<g filter="url(#soft3)" fill="#fff">
<path d="M349 309C400 312 440 320 500 314C560 306 600 298 715 296L850 346 864.5 365.5H349Z" fill="url(#gsi)"/>
<path d="M509 153C490 176 488 216 514 244Q535 259 568 267" fill="none" stroke="#fff" stroke-opacity=".14" stroke-width="4" stroke-linecap="round"/><path d="M514 407C492 428 489 470 516 496Q540 510 578 517" fill="none" stroke="#fff" stroke-opacity=".24" stroke-width="4" stroke-linecap="round"/>
<path d="M405 203L436 190 462 188 466 200 458 212 436 216Z" fill-opacity=".09"/><path d="M403 456L432 440 462 438 470 452 462 470 432 474Z" fill-opacity=".12"/>
</g>
<g filter="url(#texf)">
<rect x="760" y="521" width="170.5" height="65.5" fill-opacity=".5"/>
<rect x="761" y="602" width="170" height="55" fill-opacity=".5"/>
<rect x="762.5" y="668.5" width="170" height="55" fill-opacity=".5"/>
<rect x="761" y="738" width="169.5" height="78" fill-opacity=".5"/>
<rect x="761" y="61" width="169" height="58.5" fill-opacity=".5"/>
<circle cx="712" cy="637.8" r="41.7" fill-opacity=".5"/>
<circle cx="985.7" cy="636" r="42" fill-opacity=".5"/>
<polygon points="380,432 479,381 620,373 860,432 860,480 618,537.5 468,524 380,480.5" fill-opacity=".045"/><path d="M540 377.5L620 373 860 432V480L618 537.5 580 534C560 524 535 510 516 496C489 470 492 428 514 407C522 396 530 386 540 377.5Z" fill-opacity=".12"/><path d="M403 456L432 440 462 438 470 452 462 470 432 474Z" fill-opacity=".12"/>
<polygon points="391,186 474,144.5 615,127 839.5,183 839.5,224 613,277.5 474,257 391,216" fill-opacity=".025"/><path d="M540 136.5L615 127 839.5 183V224L613 277.5 568 271C540 262 525 254 514 244C488 216 490 176 509 153C518 146 528 140 540 136.5Z" fill-opacity=".07"/><path d="M405 203L436 190 462 188 466 200 458 212 436 216Z" fill-opacity=".08"/>
<polygon points="349,285.5 715.5,287 851,337.5 883.5,312 904.5,333.5 865,366 349,364.5" fill="url(#gstt)"/>
</g>
<g clip-path="url(#cpTex)" fill="none" stroke-linecap="round">
<path d="M779.9 760.8l15.5 16.0M838.2 704.0l5.7 1.7M909.6 640.5l20.6 0.1M888.5 581.3l-5.8 1.9M759.7 672.0l4.6 11.7M833.1 523.4l1.7 13.0M797.7 578.4l15.1 0.7M759.0 757.9l39.7 -1.6M914.1 550.1l1.8 30.2M886.6 786.6l-1.3 15.6M863.7 770.9l-0.4 25.6M761.4 585.4l2.9 10.7M856.5 718.9l18.0 -2.4M836.2 662.4l-1.2 18.7M845.6 523.6l2.5 25.6M827.8 564.4l37.9 -10.6M897.5 671.5l17.1 15.3M931.2 682.6l38.5 -0.6M756.1 742.3l-29.0 10.8M904.7 665.4l19.8 2.5M765.4 767.3l22.0 0.8M821.0 615.4l26.7 3.0M868.3 647.9l-0.2 25.5M914.3 746.5l-11.7 7.6M910.7 710.2l-0.4 5.6M757.7 734.1l-2.2 16.9M767.9 561.3l10.8 1.0M805.5 721.4l5.8 -0.3M826.5 637.1l-1.1 8.7M921.5 662.9l1.0 5.6M758.3 557.5l26.0 14.3M880.5 673.0l5.3 38.8M902.6 664.8l1.8 25.1M814.4 698.0l1.5 15.4M934.1 768.9l-2.5 37.8M892.6 635.7l0.4 5.3M917.6 526.0l-24.8 3.0M786.7 766.7l-13.6 18.3M824.9 615.6l0.7 11.8M774.3 708.1l2.5 22.3M815.2 767.8l12.0 0.7M815.6 801.2l6.0 10.9M879.8 757.9l16.9 31.7M882.1 655.5l22.5 20.4M770.7 564.2l24.8 19.6M866.0 758.9l1.9 35.3M866.7 791.7l22.1 10.0M774.3 526.3l-3.0 35.2M900.8 755.3l2.8 18.0M860.6 579.9l2.0 14.2M919.8 678.7l1.9 14.6M900.6 755.1l0.2 9.0M918.7 526.6l1.8 39.5M832.9 548.5l-0.1 8.6M923.5 624.7l-14.7 4.3M801.9 653.3l-5.5 27.3M762.3 518.0l15.5 20.7M838.2 605.9l-10.4 37.5M775.6 577.4l38.9 -5.4M855.4 714.6l15.8 -0.1M800.6 538.6l-5.9 39.0M837.9 704.1l15.7 1.5M815.5 606.9l-14.7 5.1M816.9 672.8l25.8 -0.9M800.3 520.9l-1.0 7.4M768.9 699.3l-2.2 32.7M846.3 765.2l1.6 7.5M930.6 565.2l-33.7 1.6M814.2 546.0l37.2 -0.1M809.3 774.2l-0.4 16.1M922.1 748.1l-27.3 14.9M882.6 566.7l0.2 10.5M887.2 708.7l-9.3 32.0M856.6 672.0l2.8 18.6M817.7 589.8l-3.3 27.4M832.1 680.5l0.4 9.4M802.9 755.4l-1.0 19.0M868.3 582.7l3.8 27.4M836.1 714.1l16.4 15.2M843.6 580.3l0.6 24.6M922.8 781.1l0.2 7.5M849.7 769.5l1.0 31.8M918.4 605.4l29.5 1.7M891.2 687.4l-36.6 12.3M860.7 566.1l1.2 12.6M860.4 734.7l1.4 17.1M850.3 562.8l39.0 5.0M904.5 697.3l6.4 36.4M932.5 555.3l-24.7 13.4M884.6 644.1l-18.3 1.7M903.5 640.5l1.0 36.8M932.5 549.6l19.3 0.9M776.8 600.7l0.0 11.6M836.2 521.1l26.2 -0.2M909.5 574.9l2.4 25.4M801.4 713.2l-32.2 22.1M855.9 657.3l-18.7 16.6M825.9 597.4l0.8 33.3M776.8 731.7l38.5 6.4M780.3 660.1l15.9 -0.6M848.1 618.5l20.6 2.2M811.4 630.8l-12.1 18.6M874.8 624.5l-0.0 5.1M806.4 688.5l-19.7 11.7M937.6 648.9l8.8 29.8M937.7 603.5l1.9 17.5M755.7 627.9l1.9 19.1M914.3 684.5l-29.6 9.8M846.1 731.3l19.2 -1.6M871.4 698.8l-26.8 21.9M897.0 751.4l17.1 -1.9M803.9 720.3l-1.4 10.2M909.1 655.5l30.9 3.6M833.2 618.0l5.7 0.2M848.8 789.4l26.0 -3.3M793.6 575.2l5.1 5.7M908.7 666.7l-2.4 22.8M891.3 563.9l14.4 -0.6M867.8 582.3l10.9 -2.0M901.1 766.3l-1.6 29.7M911.1 523.9l-6.0 14.9M834.9 735.9l22.3 15.1M785.6 797.2l-11.1 35.3M889.7 690.8l0.6 9.8M887.4 619.7l21.9 20.7M887.9 603.6l0.2 18.9M846.1 544.0l-5.5 35.7M795.1 525.1l-32.4 21.3M868.4 614.3l27.3 10.6M772.6 630.9l18.2 0.8M786.2 582.2l3.0 25.1M794.2 722.3l8.6 38.9M763.6 746.3l9.9 15.5M862.3 781.5l5.2 35.4M895.3 559.2l10.1 0.5M878.0 531.6l-3.1 34.3M922.6 525.3l-3.4 34.3M762.9 594.3l-0.7 27.3M892.8 714.2l-9.1 16.2M871.7 796.2l13.5 0.2M766.1 786.2l24.5 -2.0M851.6 532.6l-2.6 19.3M791.9 770.2l3.1 30.9M888.4 733.1l6.3 38.7M782.9 781.4l-6.1 3.1M771.9 750.8l6.3 -1.3M853.3 643.6l-4.7 18.2M885.9 770.9l1.7 33.0M770.9 524.9l0.2 30.6M812.9 552.7l-28.7 19.9M811.2 638.2l1.7 16.8M900.0 792.3l8.7 -0.3M875.7 645.1l-21.8 26.4M884.7 670.3l-13.1 7.7M784.1 622.4l25.1 1.9M763.1 751.3l16.0 0.8M810.2 617.3l0.0 23.4M782.5 780.2l2.3 16.3M767.7 799.0l38.2 7.6M905.9 783.4l-7.9 5.7M851.9 681.9l-23.0 18.6M893.1 619.9l-8.3 17.2M840.9 799.1l10.8 -1.3M782.4 714.3l19.4 1.0M889.7 529.5l1.0 24.1M804.2 546.0l0.8 7.7M768.5 761.7l11.0 -1.0M914.4 521.3l-1.6 14.8M919.9 688.4l-18.8 6.6M880.0 672.9l-24.5 18.0M905.6 804.5l1.9 11.9M893.2 738.4l35.7 -3.6M902.3 684.5l-0.3 34.8M839.8 570.0l0.0 9.2M811.0 772.3l-23.9 2.2M860.8 674.9l24.0 -0.2M906.4 791.5l1.1 15.5M848.7 685.0l39.1 -2.4M785.1 699.6l-16.8 18.3M823.1 631.6l-26.9 9.2M921.3 783.3l7.6 19.8M902.2 623.1l1.0 16.8M839.4 548.8l0.2 11.0M803.1 763.8l15.0 0.1M939.6 589.8l20.2 -0.2M898.7 655.9l1.1 39.0M887.5 541.5l7.1 38.2M797.4 522.6l5.5 18.2M888.8 757.0l-1.0 26.4M939.2 674.4l38.6 -5.4M774.1 675.3l-6.7 27.7M776.9 591.9l7.3 34.2M900.5 711.3l-0.5 18.6M878.7 600.3l34.9 1.4M774.6 627.0l18.7 13.7M832.1 772.5l13.7 17.5M920.6 673.0l1.1 31.6M817.4 655.9l-6.5 36.8M934.2 592.6l20.4 -0.2M895.6 759.3l0.6 19.4M779.1 571.6l25.6 4.0M932.6 669.5l14.8 0.9M883.7 592.4l-1.8 17.8M842.1 613.1l29.2 2.5M853.9 531.9l-6.5 28.4M874.3 750.5l12.2 18.6M816.1 552.1l0.0 23.9M885.0 678.3l12.9 0.6M791.9 679.6l1.2 5.0M758.7 603.5l28.8 1.8M937.2 613.9l23.1 0.8M759.3 610.7l0.0 28.8M762.6 537.4l15.3 5.1M804.8 529.4l-2.0 9.7M828.9 785.8l14.6 0.1M850.3 608.3l14.8 29.6M873.6 759.6l35.1 5.3M830.0 711.9l23.6 -3.0M827.8 775.5l24.2 -0.5M765.0 662.5l-0.7 24.1M801.3 593.6l21.4 2.2M829.6 545.1l2.0 24.0M911.1 724.7l6.0 -0.6M812.0 712.9l-2.0 35.7M795.0 759.1l17.8 31.4M784.6 761.2l0.7 20.4M776.8 689.3l2.8 26.0M756.5 791.2l-7.9 16.5M859.0 771.0l31.9 -5.0M865.7 637.5l7.4 25.1M764.9 651.5l0.0 6.5M775.6 555.5l17.5 -0.1M805.1 800.3l-15.5 29.2M906.6 586.1l18.0 16.9M821.2 561.0l-15.4 4.2M917.8 615.4l6.8 1.2M835.5 624.1l0.2 33.6M836.6 717.8l28.5 -1.0M919.9 564.9l22.1 -0.1M818.1 721.0l36.3 2.5M825.9 756.8l0.2 16.7M934.4 705.4l2.6 21.3M846.1 739.2l16.8 11.7M855.3 680.7l-9.0 4.9M824.6 546.6l0.4 7.6M788.8 737.2l10.4 0.3M934.8 754.5l18.8 1.1M872.3 728.5l-2.2 18.5M756.0 748.1l-27.0 8.1M818.4 584.4l-37.8 7.8M787.5 684.8l19.9 -1.6M902.0 786.4l-17.2 23.6M875.9 670.7l-0.3 27.5M826.6 677.4l21.7 -1.1M935.9 584.4l-1.5 14.7M831.9 687.5l-9.8 12.8M853.9 645.1l19.6 -0.5M786.0 629.7l-1.2 17.6M783.0 679.4l-20.7 17.0M890.2 612.5l-2.9 13.6" stroke="#fff" stroke-opacity=".2" stroke-width="1.3"/>
<path d="M931.9 789.9l-6.7 33.8M878.9 604.4l29.1 2.8M862.5 560.9l6.7 44.3M930.6 672.8l-1.9 15.6M761.6 523.0l40.6 -1.7M852.3 677.5l-0.6 5.9M815.2 554.6l12.1 1.8M920.3 746.1l-34.0 10.3M901.1 617.6l-11.4 1.4M894.5 722.4l26.2 -0.0M845.7 783.2l40.3 1.8M921.4 648.7l41.7 -3.4M888.9 656.1l1.0 11.6M923.0 592.8l24.4 35.8M885.6 661.2l30.8 4.3M863.8 605.4l8.2 28.8M768.9 752.9l-12.1 3.6M892.8 532.0l15.9 -0.3M796.9 768.9l3.4 14.4M793.9 770.4l1.1 33.7M760.9 620.1l1.0 43.2M759.7 726.5l0.7 15.2M905.5 560.6l0.3 6.7M938.2 558.9l2.1 18.7M868.8 730.3l0.4 22.9M896.7 729.6l-28.4 27.4M885.5 652.1l-0.8 31.4M813.5 544.6l-1.3 28.4M827.7 664.3l1.9 43.3M802.9 690.8l-1.6 10.5M765.5 524.7l-0.2 8.8M872.5 662.4l-43.8 9.2M798.0 644.0l5.2 36.6M886.3 589.4l2.4 25.9M755.9 525.3l-2.1 14.5M773.5 567.7l-1.7 13.6M851.3 649.7l2.2 41.2M933.2 726.4l1.6 25.4M862.5 529.9l0.7 8.7M903.5 621.2l41.9 -0.4M867.9 599.0l2.3 5.3M881.8 544.3l-0.5 5.6M838.5 634.1l13.2 -1.7M863.9 536.4l1.6 7.9M894.7 570.8l20.4 3.4M840.7 733.5l-0.4 8.2M912.3 700.9l-3.4 4.9M876.9 740.4l0.1 19.3M839.6 746.6l-1.1 26.0M843.3 791.9l-37.6 8.1M809.9 582.2l32.2 -0.2M924.9 684.9l18.4 5.7M939.6 557.5l-1.0 7.6M770.9 774.7l-4.5 9.1M809.8 582.2l25.9 -1.2M775.7 671.9l-6.4 6.1M850.6 722.5l4.8 40.5M840.3 718.9l-5.8 27.3M781.8 642.9l0.2 28.8M918.1 567.3l33.2 -3.4M928.3 719.6l43.5 0.5M816.2 731.2l14.0 0.2M869.9 631.8l43.3 -8.5M872.4 518.4l31.0 -1.5M906.0 520.0l-19.3 22.0M922.5 771.6l9.0 36.5M896.9 572.9l-3.4 12.2M903.8 555.0l27.6 -1.9M841.4 574.4l5.0 1.2M844.8 757.8l35.2 1.1M844.7 710.7l0.1 6.1M769.8 733.6l-4.9 34.7M900.1 632.3l10.4 0.5M785.1 625.7l16.5 -3.2M756.9 676.7l10.8 24.2M825.7 643.4l17.5 25.5M844.5 671.2l36.9 9.1M811.3 702.4l-9.6 18.4M910.5 542.0l38.9 -3.7M902.6 697.4l-1.3 14.3M839.6 582.3l-2.1 37.7M825.2 620.7l0.1 8.1M839.6 563.3l2.8 41.8M836.8 700.5l4.7 7.7M799.0 570.0l19.5 4.1M820.9 745.6l-1.3 21.0M907.4 614.3l-24.4 5.8M882.6 790.1l-28.2 28.0M928.1 733.5l18.2 23.7M879.1 621.6l1.9 11.8M932.2 617.7l43.4 2.2M778.5 523.1l0.9 19.3M924.8 771.1l5.3 26.2M798.8 756.7l0.4 11.0M813.5 783.6l-1.8 10.5M792.8 587.8l0.0 14.9M799.4 692.1l-2.2 19.8M897.0 532.9l-2.7 36.0M779.6 666.7l17.4 31.2M867.9 629.4l8.0 22.6M869.6 606.9l-8.6 27.2M854.6 800.6l-20.3 11.1M831.2 667.2l1.0 9.3M939.1 552.2l-22.3 35.1M769.3 603.7l9.2 0.3M819.9 565.2l1.1 43.8M875.1 529.4l17.6 16.7M858.4 555.2l7.4 -0.3M791.9 781.4l-2.3 32.2M917.0 555.6l9.3 0.3M794.2 530.4l-0.9 20.1M870.2 764.0l-16.0 19.6M924.6 562.3l-0.9 13.4M824.8 601.2l3.4 21.8M828.7 746.3l-4.7 23.5M807.6 737.0l24.9 21.8M884.3 705.9l1.0 12.7M862.3 702.1l34.7 -0.7M885.0 652.8l-1.2 38.4M865.6 526.1l2.0 9.1M872.6 672.8l-12.8 38.9M840.8 599.6l3.4 37.8M884.7 595.4l-4.6 21.0M831.9 723.9l33.1 -0.9M805.4 779.0l0.9 18.3M854.5 628.8l35.8 2.1M883.3 743.0l0.9 23.2M819.0 652.2l-0.6 12.7M841.8 681.3l-1.5 11.7M866.9 764.5l5.3 40.0M881.2 604.3l4.5 38.2M810.3 518.7l14.2 10.2M814.0 589.2l10.7 19.9M832.6 756.7l0.6 11.0M867.3 624.0l0.9 28.5M924.2 702.1l11.0 0.8M810.4 794.8l26.6 19.7M916.7 686.5l-1.1 14.3M794.4 532.9l10.3 -2.2M870.0 628.5l-2.8 23.8M825.3 577.4l0.6 26.3M906.2 541.2l-3.7 6.1M885.8 631.4l25.7 2.5M899.8 683.5l-9.3 10.3M759.6 653.8l-0.9 10.6M814.5 670.9l9.0 -1.3M858.2 540.1l22.1 -4.3M780.9 605.1l18.7 -4.5M817.9 782.5l9.3 0.4M900.1 620.4l-15.4 33.9M920.8 662.7l18.6 1.5M910.0 517.4l39.0 6.2M769.2 671.7l22.4 -0.0M832.6 744.3l-6.7 43.1M908.0 710.2l-1.8 41.1M762.4 586.5l-20.0 6.9M923.2 547.1l12.6 0.8M756.2 632.5l16.2 0.5M875.6 530.2l41.4 -4.2M778.4 638.8l19.9 -0.4M935.1 680.8l42.8 -4.3M902.8 702.8l-1.4 28.7M778.6 616.8l2.8 30.4M860.4 587.6l7.4 22.4M833.3 593.1l-0.0 37.9M870.0 523.1l11.3 36.9M935.0 673.9l33.5 -1.0M822.5 760.6l31.5 -2.2M857.9 670.1l21.5 3.5M848.5 775.4l-20.1 38.4M776.7 688.4l23.2 -1.1M933.2 795.6l5.0 32.5M822.1 746.5l1.5 10.8M877.9 703.3l13.0 35.0M830.3 779.4l21.2 0.0M874.7 742.2l-16.2 27.3M829.2 526.7l19.2 3.5M866.9 727.6l-7.2 37.7M815.2 538.3l22.4 -4.2M772.5 520.3l-3.8 24.4M887.1 529.9l11.0 42.4M916.9 700.3l13.9 0.4M868.3 563.1l-2.6 34.0M841.1 596.0l27.7 -3.2M799.7 760.2l12.4 7.9M905.1 724.3l3.0 39.4M863.7 663.1l1.0 21.2M842.5 619.9l-2.5 41.9M911.1 693.4l12.2 5.5M885.2 515.4l-6.3 35.6M791.4 568.6l-0.4 40.1M811.4 680.6l9.9 -0.1M932.3 566.0l-21.5 8.6M932.6 533.2l1.8 37.3M852.4 746.7l-0.0 6.1M919.7 575.4l-2.6 23.4M791.6 526.4l-4.1 36.1M783.5 581.2l30.6 -3.7M912.2 560.1l9.7 0.9M774.2 739.8l41.5 -5.7M935.3 791.1l33.9 -5.1M791.3 675.4l-1.4 5.5M873.2 723.6l-7.5 7.3M891.5 799.5l7.5 -0.6M870.7 793.9l-0.5 37.8M921.1 617.2l15.0 8.0M859.8 770.1l27.3 5.4M899.1 581.6l-1.3 8.5M789.5 641.7l2.3 18.2M926.2 704.4l2.3 12.2M931.9 705.5l1.0 21.8M896.6 579.7l2.8 26.5M922.4 540.0l-7.7 9.3M877.4 695.1l-2.0 17.4M848.0 584.0l14.3 -0.6M818.7 629.2l34.9 0.9M802.9 675.9l-0.4 43.4M927.5 755.9l-0.7 11.0M774.3 602.1l-4.1 32.3M909.3 570.1l-0.2 36.8" stroke="#000" stroke-opacity=".14" stroke-width="1.3"/>
<path d="M687.6 641.7l0.9 6.9M666.3 669.6l1.2 12.0M759.6 634.7l1.8 24.1M679.3 650.3l-2.0 27.2M728.8 596.1l-4.0 13.5M667.9 672.2l26.4 -1.1M752.5 627.5l5.7 32.6M748.5 599.3l2.8 11.2M756.7 631.4l16.6 -0.6M698.3 645.6l31.9 3.6M729.8 678.2l-25.1 0.7M680.5 671.8l-21.1 6.5M732.8 610.1l-3.1 13.2M671.0 671.1l27.9 8.0M704.0 604.3l-0.2 6.3M723.4 594.3l15.9 27.1M758.2 638.0l4.1 6.0M722.0 593.0l4.1 16.7M723.0 604.8l-2.4 33.7M750.2 625.9l20.6 -1.3M726.2 646.6l19.9 -3.5M706.0 658.4l2.7 13.8M757.9 639.5l22.3 2.3M666.9 648.5l6.8 0.1M724.6 634.3l27.0 -2.6M667.1 595.8l33.6 4.2M688.9 633.3l14.4 -0.6M700.1 646.6l-1.7 16.2M738.4 592.6l11.7 -0.1M741.4 612.7l1.9 18.0M731.3 599.7l2.1 18.0M746.3 606.1l-4.8 24.0M749.1 632.9l-1.1 10.7M741.6 669.7l-1.4 13.3M741.7 651.0l4.2 7.9M692.7 665.4l1.2 17.5M703.9 677.5l-0.5 5.1M754.6 673.6l6.9 32.8M753.1 611.1l-21.7 12.2M714.3 617.5l-0.1 22.7M692.3 667.0l-1.4 32.1M730.9 677.8l-21.2 6.9M666.2 660.8l1.1 20.7M704.3 679.2l15.1 2.1M689.0 671.9l10.9 0.2M715.8 667.6l3.1 28.6M752.6 666.6l23.9 0.6M746.9 594.7l0.3 17.7M709.9 663.8l-1.0 6.6M677.1 601.8l-1.7 7.4M712.7 620.0l0.6 15.5M726.5 645.7l-0.3 8.7M717.8 658.0l-0.7 7.4M682.0 625.5l29.0 0.6M724.2 631.0l2.3 19.8M731.8 629.9l21.0 -1.5M731.0 596.8l-0.4 17.8M748.6 679.0l-2.2 12.7M709.1 601.7l-15.4 27.6M740.3 653.4l-1.6 7.9M720.8 590.5l3.6 28.0M669.2 598.7l-0.3 5.7M744.9 601.5l-15.6 25.7M755.5 645.0l27.8 3.2M713.6 657.9l1.4 27.4M753.8 595.8l2.5 12.0M682.1 613.7l27.5 -2.0M702.4 624.9l0.6 7.5M712.5 682.4l-2.8 27.3M680.3 655.6l-10.7 17.5M711.0 651.1l7.0 3.6M736.1 677.1l10.5 -1.6M690.4 608.9l14.4 0.8M687.1 655.7l15.7 21.0M704.3 671.1l5.7 -0.0M710.6 626.4l-1.3 15.8M695.6 663.5l-3.1 22.8M709.5 669.3l-3.5 19.1M733.5 671.4l0.2 27.0M756.2 634.4l-0.5 25.3M962.4 599.8l-0.4 17.0M1027.2 666.0l16.2 13.5M966.3 606.4l-0.4 11.4M1028.1 668.7l-8.7 6.3M969.4 649.6l-28.2 13.8M948.2 647.6l19.2 -1.2M948.5 678.8l-2.1 13.9M1026.3 644.4l-18.0 9.3M979.3 646.9l0.0 9.8M969.0 667.2l-2.2 13.2M990.8 634.8l-1.7 34.9M958.6 629.2l1.0 15.6M1011.0 620.5l32.1 -1.9M949.6 595.9l-0.2 12.1M971.5 606.9l6.2 -0.9M1006.2 675.1l-22.7 25.0M941.7 617.5l-13.2 11.2M1029.6 648.9l6.5 8.6M982.2 603.0l-0.6 5.3M944.3 606.1l5.7 12.5M949.2 683.3l0.3 11.2M945.6 595.3l0.2 6.2M986.6 613.7l19.4 7.8M1013.5 628.9l0.9 12.2M979.0 593.5l0.8 12.4M1024.5 668.9l12.2 0.9M959.8 612.0l5.9 2.8M1028.2 643.7l9.6 30.6M1002.1 665.1l0.1 7.8M960.0 673.0l-14.7 3.5M1002.4 666.0l29.4 0.4M990.2 652.2l33.7 -0.9M947.1 682.3l-3.2 5.5M1025.4 602.1l-3.4 5.9M955.9 650.3l26.7 6.1M1028.1 610.8l-0.5 31.3M951.0 666.9l-20.0 8.1M1023.5 609.2l14.9 -0.1M1024.7 663.5l6.0 -0.1M996.5 636.4l-3.1 8.6M974.4 662.9l5.3 -0.0M1019.6 668.6l3.2 28.4M969.6 612.2l34.0 -0.9M949.0 600.9l17.9 1.6M1021.5 663.8l3.0 31.3M958.6 618.7l7.0 28.1M955.9 673.1l-1.3 15.1M991.5 675.9l14.4 0.3M991.8 636.2l0.4 7.3M963.3 670.5l-3.2 27.8M1033.7 649.5l32.3 -2.2M984.4 676.6l2.0 31.0M1014.8 648.2l-2.1 15.7M1002.9 602.7l-1.5 9.2M1016.9 606.9l8.7 20.5M973.3 649.0l2.4 10.1M1002.2 621.0l-0.9 5.6M941.9 680.2l-23.7 17.1M1030.6 605.1l32.9 -4.3M1012.2 682.0l-0.1 24.5M1004.2 660.8l32.8 1.4M978.6 646.9l-8.5 11.5M961.9 621.0l34.8 -2.6M1025.4 628.0l-0.7 17.3M941.3 607.5l25.7 -1.9M998.4 624.6l-3.7 9.0M946.4 682.5l-22.4 5.8M969.7 598.7l-1.5 31.7M1013.9 604.1l-3.7 13.5M1030.1 605.5l-11.5 18.1M1031.1 614.9l6.0 0.1M970.1 601.6l-1.6 34.7M967.5 674.6l-16.4 18.4M1030.5 673.5l-4.8 25.4M1008.8 642.5l19.4 2.1M946.4 606.0l11.6 12.1M1004.8 671.9l-3.1 16.3M980.2 592.7l33.7 2.0M954.5 604.9l-10.2 6.3M992.6 635.3l24.9 16.3" stroke="#fff" stroke-opacity=".2" stroke-width="1.3"/>
<path d="M724.2 660.5l-30.4 5.6M752.6 592.8l36.2 4.9M675.8 634.6l1.5 24.0M719.5 591.2l1.6 31.8M680.2 665.7l-6.9 25.7M677.0 590.2l9.9 7.7M758.3 672.9l-4.2 28.4M684.5 679.4l38.8 -1.2M749.9 618.4l-0.2 7.3M693.6 647.3l-1.7 28.7M697.1 619.4l1.0 16.0M710.7 656.9l-0.8 31.2M745.3 591.7l10.3 23.0M665.9 594.4l0.2 38.4M683.7 661.8l-16.8 3.1M698.7 639.8l29.4 10.4M740.7 671.7l-0.8 16.9M723.0 677.2l0.7 37.3M716.8 619.7l-0.2 10.2M730.5 684.7l-0.3 6.7M758.7 640.7l-0.4 33.9M708.3 630.1l-5.9 36.6M668.1 636.9l28.1 12.2M755.2 649.9l19.1 6.6M679.2 670.2l14.8 31.5M757.7 633.1l30.3 3.4M710.5 617.6l-2.8 39.5M756.2 649.6l16.8 1.3M673.5 615.9l-16.1 7.1M739.7 663.6l17.7 -1.5M731.9 616.7l31.6 -4.6M730.6 617.9l-11.5 22.6M666.1 642.0l2.1 33.5M726.5 665.8l3.2 27.4M735.1 668.7l-3.9 28.8M757.7 680.9l23.2 -3.9M680.8 669.5l2.1 29.1M733.4 659.4l-0.8 28.3M705.0 649.3l-12.6 27.5M667.6 605.2l4.3 27.4M685.8 655.2l12.8 1.4M670.1 602.7l-0.4 11.3M683.4 593.4l25.5 -2.6M687.6 675.8l-2.2 19.1M691.5 629.0l-0.4 6.3M723.3 599.0l16.8 -1.4M720.2 681.0l8.4 32.4M726.0 625.1l4.9 38.2M757.0 647.8l3.2 36.1M665.1 600.3l27.0 -1.1M749.7 625.7l0.6 12.9M692.7 682.4l-6.6 25.0M689.7 683.2l19.5 -1.0M695.3 683.5l9.3 -0.2M724.1 632.1l-4.3 32.1M743.5 591.3l32.3 -1.1M688.3 615.4l-10.9 38.1M692.9 647.8l30.9 -2.6M676.2 662.2l3.0 23.5M696.9 618.2l30.9 -2.9M721.1 593.5l-0.5 20.9M752.1 674.4l19.7 3.4M719.7 657.3l21.9 0.3M751.6 626.6l-0.7 15.4M743.9 596.3l-11.6 16.5M692.2 664.2l19.6 9.4M717.2 637.3l0.7 10.4M720.7 667.1l-0.9 32.7M728.0 592.4l-39.9 2.7M731.6 594.6l21.3 17.5M1015.4 668.1l28.2 -0.0M984.7 662.2l-0.1 32.0M965.9 666.2l6.4 23.0M1004.8 608.3l33.1 0.9M1005.1 670.2l0.7 8.2M1016.0 666.5l-1.8 27.2M967.7 680.4l12.0 0.4M1002.3 624.2l-22.1 6.5M1001.2 656.3l-6.0 0.4M974.3 647.2l1.6 35.8M989.9 601.1l15.9 -0.4M958.6 636.0l-1.8 29.4M941.2 663.9l-3.8 16.2M1025.9 648.9l0.8 9.4M1035.0 595.1l-2.6 31.0M977.8 683.2l-7.1 27.6M1024.5 632.5l-18.5 13.8M984.7 657.0l0.3 8.0M1010.9 615.3l5.8 0.1M951.7 646.0l1.0 13.9M982.9 678.1l5.5 25.9M965.5 635.1l9.9 1.1M975.9 619.0l14.8 23.9M1032.2 677.7l1.6 18.9M986.4 665.4l3.2 4.1M982.7 595.4l2.0 32.0M950.7 658.3l-1.6 7.0M958.3 680.0l19.7 -1.5M1014.3 667.3l17.7 -0.8M953.8 649.4l10.0 0.1M999.7 599.2l3.0 36.4M999.8 656.6l3.6 34.0M947.9 648.7l-34.8 10.4M982.9 655.9l34.5 15.9M1026.3 631.9l2.4 14.5M1007.7 596.0l-15.0 1.0M1029.3 597.9l24.8 29.9M980.9 677.6l-5.2 26.9M990.9 593.1l-2.0 17.9M944.9 684.3l-29.2 4.6M972.6 597.4l22.6 8.5M984.1 637.0l-0.8 6.0M989.9 604.3l-0.7 10.3M994.0 626.9l-1.0 36.9M979.8 605.5l-2.0 13.3M994.4 664.7l18.3 0.6M981.9 627.8l-4.5 27.8M1008.1 651.3l11.1 26.1M1032.4 605.6l18.4 1.5M945.8 593.8l28.0 10.5M949.5 624.9l2.6 12.6M993.7 677.6l1.2 21.5M1008.8 672.1l0.3 8.9M1033.4 594.8l-20.3 20.3M1009.3 651.8l1.1 20.5M959.2 671.6l-9.8 7.7M996.3 614.2l-27.7 28.6M1007.3 655.0l24.7 7.5M943.1 624.9l-1.0 37.2M1030.0 631.4l9.7 1.6M940.9 596.5l0.3 34.0M948.3 646.1l-1.0 11.3M1032.8 626.5l24.7 1.9M999.6 635.6l-1.9 11.6M982.6 666.8l37.7 6.0M1016.9 638.8l4.0 34.9M990.4 656.0l3.2 34.3M1025.4 604.7l-32.0 13.9M972.1 613.9l1.3 17.9M1021.2 624.5l0.5 26.8" stroke="#000" stroke-opacity=".14" stroke-width="1.3"/>
<g clip-path="url(#cpBody)">
<path d="M603.1 399.9l31.7 3.5M502.0 458.7l-2.4 35.9M506.5 390.0l-0.7 23.4M718.4 531.4l33.8 -1.5M851.0 382.7l11.5 14.7M524.8 425.9l37.9 24.1M722.8 436.4l22.3 0.7M738.6 445.6l-0.7 45.1M652.2 424.5l-14.4 20.0M698.3 461.7l-18.0 20.5M852.5 394.5l-0.1 39.3M494.9 485.3l-14.2 60.9M599.2 489.7l44.7 -2.6M653.4 513.6l4.1 49.7M503.1 490.7l26.6 5.0M626.6 485.3l0.4 37.7M543.9 394.3l-0.2 24.9M628.6 518.8l2.3 36.9M688.8 520.8l-24.3 11.1M637.8 434.2l-18.9 2.5M547.0 413.3l4.1 25.4M481.6 444.1l-0.7 44.0M842.2 488.9l13.2 -1.5M821.8 503.7l-27.0 19.9M631.6 392.1l13.7 -1.4M505.6 409.4l0.2 10.0M537.5 391.7l-0.4 11.5M812.2 476.3l0.1 31.8M526.7 515.1l4.2 38.8M512.6 391.9l-2.9 25.7M795.0 401.6l-2.6 18.6M686.4 379.5l68.7 -2.6M808.1 489.9l2.7 56.2M682.4 503.5l-1.3 23.3M788.4 537.5l-48.5 33.8M761.2 412.4l11.7 -0.2M586.2 417.8l67.4 1.3M649.9 529.6l-31.6 4.5M563.8 412.4l-3.0 63.9M799.4 454.1l57.5 7.8M512.2 484.0l-42.6 34.8M661.7 404.5l29.2 50.2M849.2 440.3l-3.7 19.9M528.3 399.9l-15.4 10.7M794.1 536.8l31.0 -1.6M688.5 396.6l-7.1 41.0M834.8 446.6l-19.4 11.8M575.7 423.3l1.4 45.2M578.6 444.1l-3.5 37.3M701.7 524.2l3.9 64.9M670.6 462.8l20.9 2.2M481.5 506.9l-0.6 38.4M755.6 466.8l8.6 56.4M520.3 467.4l0.5 26.6M773.5 458.8l36.6 0.5M712.8 458.4l50.3 -11.3M651.9 463.0l61.9 9.0M838.0 417.8l66.5 -3.7M799.2 397.6l1.1 24.4M507.8 485.5l-18.3 6.1M752.1 483.9l-1.0 63.0M847.7 411.2l12.3 37.2M856.2 512.4l4.0 30.1M554.4 427.6l43.2 2.6M647.4 378.0l-2.9 47.3M674.7 385.6l-53.8 42.1M519.8 418.8l-0.3 17.8M640.5 525.4l13.0 13.8M829.3 469.1l12.9 3.7M741.5 445.2l6.2 66.0M721.1 507.3l-1.7 61.7M652.4 431.0l65.6 -1.9M581.8 396.3l19.7 0.1M499.1 408.3l-1.6 28.3M768.6 422.8l11.1 0.4M575.2 377.5l-3.4 21.1M660.4 529.2l-5.9 58.8M644.2 456.7l13.3 38.1M741.3 537.1l-4.5 48.0M633.8 432.3l2.9 17.6M506.9 497.2l-1.6 60.5M810.8 485.6l-1.1 24.5M591.4 450.8l6.0 67.4M849.6 465.3l-2.1 67.9M597.6 433.8l4.0 40.0M556.4 458.3l-2.4 25.7M514.1 440.9l-2.4 23.8M702.5 462.3l-25.2 46.6M814.1 439.3l-1.0 69.1M536.8 494.5l62.5 11.5M718.4 496.1l37.5 17.6M671.7 512.8l-38.5 23.4M819.3 487.7l23.8 1.2M491.8 397.0l-7.8 42.8M718.6 478.3l39.1 4.6M481.3 506.6l-0.4 42.1M730.5 385.9l10.2 10.3M580.9 495.3l0.8 39.6M625.4 454.0l54.0 -15.1M714.5 481.1l-3.0 54.5M595.7 468.7l-1.0 13.6M582.1 485.9l41.0 -1.5M656.6 451.9l5.6 63.4M555.7 536.4l37.5 2.1M791.6 534.7l0.6 66.7M560.1 470.9l-3.4 41.3M842.0 396.9l-1.7 63.2M747.3 413.2l0.5 11.5M481.4 456.1l30.6 -0.5M600.1 513.6l-3.4 54.9M798.9 394.8l-39.8 50.3M590.1 436.4l-5.0 31.2M642.7 420.4l0.0 16.1M797.2 422.1l18.4 18.3M674.2 406.3l-13.9 57.0M719.7 525.7l-8.2 52.5M498.8 495.8l55.1 -3.1M724.9 422.2l-2.1 38.3M610.6 424.1l-25.5 1.9M729.3 424.6l33.7 -0.8M543.6 401.7l-2.7 23.0M824.4 539.4l1.4 18.3M553.1 390.0l-1.9 25.4M696.5 521.4l9.4 33.5M679.2 437.2l-0.7 13.7M585.5 534.7l10.4 60.9M562.1 419.7l0.1 34.0M649.4 532.4l-10.4 4.4M492.3 492.1l3.8 45.1M480.1 439.6l-52.3 31.9M849.5 416.0l-4.2 50.8M837.8 494.1l55.6 5.6M653.8 466.0l-1.1 65.2M725.3 425.1l2.1 25.0M721.8 490.3l-5.9 44.6M627.5 411.9l10.6 0.6M594.6 451.0l-27.7 56.6M660.6 413.7l-5.1 28.0M488.3 457.2l35.2 -1.3M577.8 485.1l9.1 7.9M608.5 444.4l54.3 3.1M671.9 408.9l33.0 49.1M567.7 411.5l40.3 53.7M668.4 405.9l-7.1 34.3M732.8 531.5l4.5 68.3M533.9 383.6l-1.7 33.6M821.3 520.8l-65.9 0.5M605.1 405.6l-8.3 8.5M732.5 437.5l0.4 10.2M586.3 433.0l62.8 25.7" stroke="#fff" stroke-opacity=".08" stroke-width="1.2"/>
<path d="M566.1 533.8l0.4 24.8M859.7 409.6l37.5 -1.5M652.2 456.7l-0.6 24.0M487.6 419.0l2.9 64.1M624.0 393.8l-2.0 47.2M623.3 484.0l0.1 51.5M669.1 482.2l-4.7 17.9M504.5 531.1l44.6 3.7M757.0 520.4l-8.4 30.2M813.7 397.3l49.0 15.5M746.8 531.7l-0.2 21.9M537.1 462.2l39.7 7.8M746.5 411.3l-1.2 10.6M610.4 419.0l10.3 62.6M546.6 440.4l-7.9 49.2M850.4 408.3l6.3 8.7M770.4 431.4l2.8 34.5M649.5 444.0l27.3 0.8M516.1 389.1l6.6 58.1M671.9 491.8l10.8 2.2M533.3 438.7l54.6 -0.7M613.5 534.2l-2.6 62.5M492.6 534.3l-44.8 1.3M547.6 535.0l1.1 15.0M710.1 457.0l44.8 1.3M652.0 395.9l-2.7 53.5M751.9 452.8l1.2 21.8M649.6 392.9l-28.4 37.0M488.6 435.1l-1.0 15.6M847.8 499.7l23.8 -0.4M679.8 497.8l10.4 -0.7M713.0 525.0l-67.1 15.5M565.0 423.9l66.2 6.3M803.2 460.2l67.4 -0.9M777.6 423.8l26.3 18.6M844.3 514.8l2.5 60.5M740.0 529.4l-39.2 24.7M617.6 445.5l41.4 5.5M798.5 419.4l0.4 35.2M524.5 511.8l2.6 27.4M785.6 458.2l-3.0 31.5M846.9 505.4l41.6 41.6M706.7 511.9l4.5 56.7M781.5 439.0l65.1 3.9M778.8 397.6l48.7 -15.6M513.1 451.3l-62.6 19.2M515.2 475.2l-13.5 25.9M494.7 526.8l-14.8 28.3M794.8 509.4l-9.0 27.7M592.7 434.0l3.1 53.2M612.3 401.4l0.2 33.4M643.9 504.1l-0.4 20.6M764.8 393.0l-4.3 43.1M759.7 511.1l53.9 -5.2M662.0 467.9l-65.9 0.5M530.4 428.9l-4.4 19.7M769.6 385.0l-12.4 45.1M637.6 529.5l50.7 9.2M853.7 455.8l9.9 59.8M680.6 426.0l60.2 -3.1M670.0 535.3l66.2 0.5M589.9 410.9l48.8 1.0M527.2 440.0l7.1 31.5M839.0 432.3l51.3 -2.1M510.3 405.5l17.6 -0.7M846.5 445.2l69.9 3.3M495.0 474.2l69.1 -0.7M616.1 531.2l24.1 -1.5M618.8 432.1l-0.6 58.5M622.5 478.7l-7.6 63.0M599.0 380.4l-4.6 31.3M619.2 467.6l7.2 56.5M761.7 471.4l10.1 59.6M590.0 516.9l4.8 49.0M609.6 470.4l19.4 41.7M653.4 452.6l4.4 42.6M749.5 403.7l-1.3 57.6M768.5 410.9l25.2 -1.0M815.0 407.6l-4.2 22.3M599.4 536.2l-30.3 32.7M723.4 376.8l31.3 52.7M637.5 525.4l-3.0 68.8M516.4 459.3l68.1 10.9M824.2 445.1l0.3 18.8M749.6 532.0l49.3 -3.8M576.1 489.5l-1.5 11.6M504.4 455.6l51.6 0.8M580.0 461.2l34.2 3.4M559.2 489.3l48.4 32.7M729.0 518.0l0.9 52.9M599.5 482.8l5.1 62.9M739.9 525.0l-46.9 4.3M714.4 452.4l-6.8 57.4M711.9 401.7l-1.6 45.8M556.4 488.5l25.7 4.1M648.9 538.8l-0.8 60.4M830.2 440.9l30.9 12.1M805.6 484.7l-7.3 45.3M665.2 465.4l-22.0 1.7M766.9 530.9l38.9 -3.8M700.7 475.9l0.0 69.9M584.9 465.3l1.0 30.1M626.2 426.6l19.5 -0.6M666.5 506.3l37.5 9.2M657.8 500.8l-6.4 49.6M742.5 459.8l34.0 -1.6M650.5 453.2l15.0 8.2M830.9 459.2l43.6 6.2M841.8 478.0l2.1 20.9M540.5 505.7l18.1 37.6" stroke="#000" stroke-opacity=".28" stroke-width="1.2"/>
<path d="M646.7 184.1l-0.4 40.2M803.4 141.7l47.0 -0.4M494.7 185.0l8.0 52.9M536.6 164.5l12.2 43.8M758.7 185.6l26.1 8.6M722.7 235.2l0.2 15.3M576.0 160.4l-1.8 63.2M796.6 137.9l2.9 39.4M488.5 191.6l43.0 15.8M523.6 213.9l8.4 6.3M510.1 208.3l-7.9 64.8M631.2 187.7l15.6 0.9M688.7 155.0l43.3 1.4M698.3 151.6l0.7 69.7M839.3 147.6l-23.9 3.7M700.0 136.2l4.2 56.3M511.2 180.3l-9.7 35.8M624.8 273.0l11.0 -1.3M767.8 177.7l-0.9 29.5M512.0 221.3l-7.2 56.6M489.1 243.2l0.4 52.6M569.4 237.0l-1.3 34.0M614.3 254.7l-15.1 47.7M541.6 252.3l-6.2 19.4M820.7 273.0l10.7 0.9M501.9 160.2l7.4 30.4M530.6 211.5l3.0 14.9M680.1 230.9l9.9 55.0M617.9 258.6l-3.0 52.8M757.8 257.6l41.7 1.1M542.4 221.3l-1.3 56.8M560.1 131.9l4.9 32.9M542.3 199.9l-7.4 66.1M490.4 274.0l-5.8 41.0M673.4 261.9l-2.0 48.5M675.2 173.5l-10.3 12.5M731.8 195.8l46.2 -1.0M614.3 257.4l1.8 59.4M742.7 220.6l45.5 5.2M700.8 228.3l-3.3 46.4M545.3 139.4l-1.2 38.2M672.8 133.8l28.4 49.4M483.1 268.3l57.5 17.1M518.2 180.6l3.0 56.7M549.2 162.1l-14.0 67.1M614.1 237.5l40.8 6.6M613.0 222.0l0.1 21.8M638.1 266.9l-2.3 16.0M768.0 138.4l-2.3 23.1M501.1 169.9l7.6 57.5M831.2 244.0l-61.1 13.5M811.2 270.3l1.7 46.2M657.0 180.3l7.0 21.4M579.5 197.0l44.0 3.0M638.4 157.0l1.4 42.6M547.9 233.2l18.2 1.0M705.1 179.0l10.0 62.2M744.1 160.6l30.0 -3.2M486.9 210.1l59.9 3.6M665.1 144.4l26.3 32.8M505.7 131.6l18.8 2.5M538.8 143.9l-48.9 0.7M622.4 258.8l18.1 -1.2M728.5 182.1l1.1 20.9M700.5 255.9l10.5 0.9M726.3 132.9l64.2 6.4M751.7 169.6l5.0 36.8M724.7 163.6l0.1 46.1M676.3 264.7l2.3 21.1M760.3 227.0l-2.3 42.5M804.8 161.4l-3.2 51.0M632.3 252.8l-51.9 10.5M658.6 138.8l11.8 35.9M707.6 269.8l14.7 3.4M607.7 258.8l-21.1 2.1M671.2 265.3l49.8 -6.4M831.0 155.1l-2.1 21.9M779.6 171.1l3.5 27.6M493.0 188.8l9.8 67.2M495.1 155.1l3.6 49.9M668.4 214.2l-51.6 40.1M534.8 185.0l8.6 25.7M653.5 156.2l-6.5 14.3M827.1 205.5l1.7 46.7M821.9 180.3l-0.6 41.7M592.1 253.5l-0.4 10.9M647.3 147.9l-0.6 48.2M817.0 183.7l29.3 1.8M809.4 210.2l0.1 12.8M487.0 251.8l18.7 39.2M733.9 140.9l-40.6 52.7M501.3 213.0l60.6 -4.2M611.1 226.1l18.7 36.4M801.7 134.9l20.8 31.2M583.6 245.7l62.8 -0.0M775.5 228.6l1.4 25.5M642.7 139.4l19.2 64.4M545.9 224.0l-15.5 31.8M486.9 193.1l-20.2 64.3M832.9 154.5l3.0 27.4" stroke="#fff" stroke-opacity=".045" stroke-width="1.2"/>
<path d="M685.7 192.2l59.3 3.0M715.3 153.2l29.2 5.2M570.0 268.2l61.0 8.6M697.1 185.3l3.1 51.1M718.3 149.3l-68.1 3.8M700.8 136.4l2.1 17.9M818.8 173.9l-3.6 42.8M637.0 139.4l60.6 -3.1M536.3 162.5l-8.1 58.5M716.8 207.4l39.3 20.0M614.7 217.2l-1.8 56.5M514.8 154.1l-35.5 5.9M629.1 165.6l1.0 17.1M644.1 153.9l59.2 -2.5M759.9 199.6l0.6 52.8M599.4 176.3l-0.2 36.9M689.8 186.6l-12.7 20.9M669.1 262.0l39.3 -1.1M646.1 188.2l1.2 45.1M673.9 201.0l10.1 33.4M492.7 130.4l13.0 1.2M513.4 145.8l37.3 4.3M637.1 202.7l0.3 53.6M803.3 231.2l3.0 19.0M565.4 219.8l47.8 -8.5M691.9 250.3l36.0 3.3M789.2 234.1l64.1 9.4M756.1 269.5l31.3 39.2M530.9 216.3l25.5 17.6M508.7 158.2l4.5 15.1M839.9 258.7l41.3 -0.3M632.5 226.3l25.6 -4.0M611.2 221.0l62.5 2.2M793.7 224.6l-5.6 35.0M512.0 138.0l9.3 46.8M581.7 230.8l40.4 1.8M574.9 194.0l0.7 36.8M651.7 199.6l52.8 -6.0M768.4 188.8l-69.1 7.7M739.4 139.5l-9.6 5.4M598.0 176.7l-9.1 25.3M547.1 154.4l-1.6 23.1M748.2 267.9l11.9 42.7M638.2 271.4l22.1 1.1M785.3 213.3l67.2 4.2M597.6 136.9l12.8 -2.0M683.5 254.7l1.2 19.4M698.2 255.4l64.9 6.4M664.0 180.7l2.0 44.6M605.2 151.1l-28.1 37.1M740.1 273.0l-3.1 30.4M681.2 196.5l7.1 35.3M534.9 265.2l7.1 68.1M765.7 182.2l1.5 12.9M498.7 175.1l20.4 3.2M709.0 182.3l-1.5 45.9M634.4 180.1l0.2 19.8M626.0 239.1l20.4 0.7M796.7 214.3l9.8 39.6M800.4 186.8l-1.0 16.4M739.8 175.1l0.7 49.0M800.9 180.1l-17.1 43.2M671.7 131.8l1.3 15.8M709.3 198.8l33.6 -4.7M558.4 181.5l51.2 34.5M671.2 140.9l60.1 3.3M601.9 263.2l20.4 42.9M835.2 154.8l1.3 24.8M568.7 219.1l34.6 6.3M678.4 134.5l-2.2 56.2M832.5 148.1l-0.1 10.9M636.2 225.9l13.1 1.4M615.5 196.6l1.1 12.0M705.9 200.9l5.9 13.0M575.5 155.5l41.5 1.0M530.7 145.2l-2.1 52.3M770.4 247.4l35.4 -3.9M663.5 233.4l46.2 -5.8M712.7 207.7l2.2 35.1M789.0 184.2l16.8 2.4" stroke="#000" stroke-opacity=".17" stroke-width="1.2"/>
</g>
<path d="M445.0 496.8l15.3 19.6M466.0 479.4l-2.8 24.3M414.0 460.2l-0.5 26.6M493.7 448.2l25.4 5.0M485.7 418.1l-5.3 28.5M409.2 464.8l-6.3 13.4M394.4 512.8l25.8 1.4M478.5 510.4l0.0 16.2M390.9 490.2l-2.8 24.9M484.8 428.7l29.1 -0.7M445.6 443.2l-0.4 21.3M448.9 466.4l1.7 22.4M490.4 438.3l-1.9 13.9M386.1 490.4l1.6 18.2M416.3 476.0l5.4 8.0M498.5 509.2l2.8 16.6M469.1 515.2l16.6 -1.0M407.5 430.2l-1.7 26.5M446.8 496.6l-7.5 5.1M491.5 411.1l-19.6 10.9M431.4 409.0l-1.2 22.0M412.8 463.9l-1.2 23.9" stroke="#000" stroke-opacity=".07" stroke-width="1.2"/>
<path d="M414.0 222.8l-0.8 18.8M445.4 200.4l-1.8 13.5M467.6 185.7l28.7 1.3M419.6 176.1l-2.9 12.1M466.1 246.1l11.3 9.2M395.7 257.3l5.6 23.3M451.5 215.3l14.6 0.9M407.1 202.5l20.7 10.2M461.3 167.6l3.3 22.9M440.9 194.8l20.8 2.6M451.1 187.4l-17.0 10.5M404.3 166.3l-1.1 9.7M463.1 209.8l-3.6 25.2M480.9 225.0l29.6 -2.2M409.0 225.8l1.8 25.9M414.0 195.8l1.7 11.0" stroke="#000" stroke-opacity=".05" stroke-width="1.2"/>
<path d="M691.9 332.0l3.8 35.2M743.2 303.8l14.6 -1.8M635.3 296.8l-6.9 9.9M893.2 362.4l40.4 -5.3M579.8 291.1l22.1 1.3M531.4 324.8l-1.5 52.1M717.3 338.0l23.9 -1.4M899.1 364.7l-15.7 20.5M607.3 311.7l5.5 48.0M672.2 353.5l-2.2 9.8M599.7 358.3l58.9 -3.0M671.0 295.5l14.4 0.2M646.4 362.3l20.8 8.1M558.4 294.5l32.2 20.1M690.0 304.3l38.7 16.9M564.3 321.6l2.2 23.4M889.0 350.3l-1.8 29.7M844.7 338.1l3.2 59.4M601.0 309.4l12.7 21.3M547.9 296.8l28.6 0.2M692.2 361.9l38.4 5.2M849.3 303.7l-4.2 22.1M592.1 345.5l46.9 33.3M855.2 335.3l1.8 15.1M534.7 362.2l1.3 51.2M746.7 312.0l4.1 45.8M546.1 307.1l23.9 2.0M868.6 305.3l3.1 23.3M689.4 294.5l1.8 16.5M657.6 356.8l-21.1 39.3M742.1 300.5l-1.2 10.8M865.9 342.6l41.7 2.8M703.2 344.8l-1.8 37.3M800.1 357.5l-29.7 39.8M867.7 316.4l55.0 -0.0M851.0 321.3l-35.1 16.1M757.5 318.7l41.9 -1.3M897.5 356.0l16.1 43.9M740.8 323.0l45.9 12.4M531.3 335.1l21.5 -0.6M785.4 327.3l10.5 0.7M634.4 340.9l0.8 18.5M864.2 339.5l-3.6 43.1M595.4 322.3l-52.1 14.4M666.1 333.7l1.1 16.8M708.7 352.8l-35.4 45.3M625.2 302.7l30.7 -0.3M757.8 327.0l-4.3 51.8M893.2 323.9l-2.9 11.7M789.3 332.8l-2.4 49.5M527.3 300.2l21.5 4.0M573.5 293.5l32.3 0.9M759.4 339.1l-43.8 5.8M595.7 325.6l-6.2 45.3M588.1 310.4l-0.4 44.9M717.8 336.1l16.3 46.8M864.4 296.5l-10.6 12.6M692.3 336.9l14.5 35.6M854.1 349.8l4.8 42.3M597.9 344.1l-19.7 41.4M601.1 357.5l-36.8 2.6M820.5 314.0l-24.7 12.0M551.5 323.1l11.4 0.2M827.5 294.8l22.9 13.8M819.4 300.5l4.9 35.5M795.0 353.0l57.1 6.3M552.7 306.6l24.5 -1.0M797.0 337.9l25.5 1.8M664.9 353.4l41.7 32.0M888.0 329.3l19.9 -2.1M723.6 327.7l34.6 9.2M672.2 350.1l34.5 1.6M782.6 294.9l54.9 -12.0M622.3 325.5l-4.9 31.3M830.0 357.5l40.9 -1.1M871.6 299.7l19.7 1.4M606.4 341.5l-2.0 27.7M755.5 297.9l32.9 13.4M615.2 304.8l30.5 -2.7M721.2 302.0l-1.9 41.5M762.6 329.7l-18.2 49.6M608.4 345.6l-24.6 7.8M639.7 359.2l-4.1 16.2M611.0 344.5l0.0 14.9M836.2 321.6l27.8 11.6M780.4 291.3l6.3 58.1M563.9 327.9l-0.4 44.3M591.8 295.3l2.8 11.5M729.6 328.6l20.2 0.8M839.3 364.3l12.5 3.9M881.6 324.7l17.3 28.5M715.8 322.3l10.6 0.5M786.4 353.3l5.7 29.7M594.1 302.4l10.8 0.5M859.4 350.1l-37.6 17.6M673.7 335.0l22.5 4.1M866.3 345.8l-25.3 16.7M860.7 356.0l48.4 -0.9M810.8 320.4l26.4 6.0M698.2 290.8l2.3 21.5M879.0 340.0l5.5 42.6M736.4 330.0l-7.7 44.4M809.5 363.5l0.0 40.8M800.7 309.2l-2.2 28.7M557.4 308.8l-5.5 35.0M887.5 332.6l-21.2 45.8M549.0 334.8l55.9 8.0M580.8 325.4l-0.9 34.8M752.2 294.4l9.0 35.2M747.2 317.4l2.1 24.1" stroke="#fff" stroke-opacity=".07" stroke-width="1.2"/>
<path d="M700.3 339.3l28.7 0.3M624.1 350.8l40.1 0.5M732.1 339.6l3.7 55.2M542.4 351.4l-1.2 44.3M648.1 320.3l13.0 0.8M867.7 328.2l-4.5 15.0M680.8 300.1l1.0 41.1M582.1 342.3l-3.1 29.9M679.2 334.7l28.8 4.7M531.6 344.5l-43.1 3.2M655.4 317.2l21.7 -0.5M658.1 328.4l-0.0 11.4M832.6 322.3l21.1 -0.9M682.4 319.1l35.6 11.9M587.7 342.2l0.8 41.8M539.8 324.4l-2.6 24.0M701.0 361.9l56.1 3.3M658.4 304.2l-9.9 2.8M621.9 347.8l0.4 22.1M523.3 293.0l32.9 12.3M529.1 314.2l-36.3 21.1M607.2 329.5l41.3 -1.5M619.8 361.0l21.4 12.0M851.8 310.9l-2.1 44.7M787.8 306.1l0.3 44.7M570.1 356.5l-4.0 21.7M685.4 363.5l57.4 -9.2M809.0 321.3l54.4 -8.7M819.9 333.5l5.0 37.8M526.5 343.3l-44.2 32.6M866.0 330.1l5.5 13.9M654.2 313.4l-20.8 30.7M756.4 299.4l44.7 5.4M669.8 308.4l1.4 17.0M554.4 313.4l47.5 6.5M770.6 360.1l-4.4 31.9M588.2 340.1l-0.6 21.9M644.4 360.8l1.2 20.0M684.3 306.5l-0.1 44.9M581.7 324.8l52.0 3.2M615.0 324.5l-18.5 10.8M724.4 347.1l4.8 58.4M730.5 341.1l7.3 46.0M642.5 327.5l0.5 21.3M726.8 308.9l-3.0 50.1M628.5 360.2l54.2 -8.5M642.0 299.4l51.7 6.8M751.2 348.8l2.1 30.3M664.3 318.8l3.2 50.3M584.5 305.4l-1.8 12.5M837.5 355.5l20.1 42.2M636.1 300.3l-17.8 10.3M854.3 291.8l0.3 10.6M585.0 302.2l11.6 15.7M589.9 313.4l-5.0 14.3M780.3 330.2l8.5 49.3M712.0 337.7l41.7 -1.0M667.6 321.1l56.2 -1.0M706.8 354.2l57.6 -4.6M779.3 322.0l8.1 51.3M569.1 294.7l1.8 14.1M541.4 290.6l-5.6 40.4M886.9 362.0l-11.3 1.8M606.6 359.5l20.2 2.0M807.6 321.8l14.4 -0.4M750.6 361.5l-41.9 38.1M657.6 312.4l-13.4 41.3M524.8 307.1l46.4 3.2M833.8 346.8l10.4 58.6M704.3 304.6l36.5 4.9M657.4 307.3l1.8 37.0M881.9 345.9l1.3 30.9M558.9 345.3l39.7 2.3M739.3 318.4l-3.7 27.5M899.1 314.8l29.9 -1.8M597.9 314.2l-0.5 27.5M876.4 312.3l2.4 35.7M766.1 295.5l15.0 -1.3M615.1 350.7l-9.6 15.9M686.5 311.2l14.7 13.3" stroke="#000" stroke-opacity=".25" stroke-width="1.2"/>
<path d="M783.9 345.5l29.3 -2.0M877.1 333.8l14.4 0.1M760.5 324.5l14.1 2.3M793.7 302.8l-21.6 23.1M849.3 302.2l-1.9 21.3M776.8 362.8l-1.4 11.3M894.6 329.9l17.1 2.6M830.3 312.3l-1.7 29.0M790.2 363.9l-20.5 19.9M844.2 348.2l1.4 20.8M879.9 313.3l-17.9 6.6M813.0 329.8l-1.0 8.7M773.5 347.4l0.3 21.3M839.8 349.4l0.1 24.4M840.7 341.1l-1.8 33.0M810.3 339.4l-1.0 10.7M769.5 353.7l10.1 24.4M858.0 359.3l10.0 33.2M899.4 339.0l0.5 18.1M795.8 357.8l-5.7 28.3M830.1 355.2l-1.4 14.9M802.0 327.7l-3.2 32.1M902.6 349.2l14.8 0.6M899.0 334.7l13.7 1.2M881.5 352.5l-6.1 18.5M844.3 356.1l2.7 28.6M761.5 345.2l24.0 1.8M853.4 356.2l14.9 -0.3M818.8 363.3l9.6 4.3M773.6 301.7l-3.9 25.4M778.3 335.6l-4.0 21.0M791.8 311.0l3.1 22.6M766.7 346.9l-22.3 19.1M761.1 330.6l-3.7 28.4M785.4 347.0l0.3 9.1M816.4 320.4l13.0 17.3M839.7 362.6l2.4 24.1M833.7 348.5l15.1 22.2M836.2 337.0l-2.3 17.4M806.1 365.6l3.0 9.6" stroke="#000" stroke-opacity=".4" stroke-width="1.4"/><path d="M898.9 309.3l-0.9 11.2M854.5 322.8l25.3 22.6M806.3 339.7l-18.1 27.5M862.7 303.2l-4.6 15.7M787.6 356.1l33.3 -0.0M872.2 363.4l15.0 -0.7M898.7 320.6l-25.3 3.6M780.6 354.5l12.9 -1.7M767.1 335.1l-2.8 21.8M819.4 343.6l10.3 14.9M844.5 319.6l22.6 -1.2M822.9 344.4l16.9 5.0M822.6 326.6l-21.6 3.3M818.1 306.4l19.5 11.7M810.6 321.7l-2.8 12.9M765.4 335.3l-6.0 12.0M860.6 303.4l-2.6 20.3M882.7 332.9l23.3 -4.7M903.7 349.1l17.5 -0.4M873.7 354.1l33.1 -4.7M762.6 333.0l26.7 -0.9M823.0 317.8l-2.1 34.0M811.1 307.8l0.1 12.9M800.1 306.4l13.3 2.7M809.9 348.5l-7.8 4.5M814.8 356.0l-0.7 18.3M868.8 347.4l14.6 1.6M793.5 317.6l1.1 32.0M853.7 303.7l24.3 -1.2M766.1 332.1l-0.0 25.1" stroke="#fff" stroke-opacity=".14" stroke-width="1.4"/>
<path d="M354.6 298.4l0.3 12.2M400.2 346.8l2.1 35.3M489.7 300.2l44.7 -4.4M371.4 291.5l4.6 14.6M420.7 317.4l12.7 9.8M473.7 331.1l-18.5 10.3M394.4 352.7l35.0 3.4M532.6 338.8l-1.5 37.4M503.8 304.5l20.4 0.1M421.5 319.7l38.9 1.1M552.0 363.2l-15.3 11.9M388.7 336.8l15.1 -0.3M543.6 335.1l11.5 -0.5M435.0 358.3l24.8 1.6M518.5 323.4l-2.4 12.1M372.6 363.7l0.1 15.2M421.7 343.5l2.0 26.4M516.0 310.9l1.2 9.3M375.3 300.3l-25.1 36.2M511.6 309.1l-20.9 1.0M354.3 318.1l1.6 14.4M361.4 299.4l30.3 4.8M395.0 304.5l8.7 11.9M446.6 342.1l27.3 1.8M501.2 324.6l1.3 12.9M377.7 348.7l-33.0 6.0M472.6 302.5l22.1 8.6M381.3 318.6l2.2 23.6M499.9 330.6l-1.4 38.6M358.9 336.1l10.6 11.2M521.3 317.3l7.3 37.5M431.9 304.9l2.3 21.5M512.4 294.9l-4.7 30.8M451.7 327.5l9.5 11.3M359.0 326.2l0.1 8.0M431.0 346.8l-0.1 41.8M472.5 320.3l22.6 20.3M528.1 330.6l-1.9 14.8M429.6 330.7l-14.1 23.3M530.5 313.1l-2.9 32.9M467.3 306.6l-1.4 34.1M362.0 361.6l19.9 -1.3M556.5 349.7l-0.1 44.9M381.3 293.6l-1.3 9.6M437.1 330.4l-0.6 37.7" stroke="#000" stroke-opacity=".12" stroke-width="1.3"/><path d="M368.1 306.0l-3.9 34.4M372.8 328.2l-3.1 42.8M535.4 317.8l3.0 35.8M378.3 290.7l-34.3 18.5M550.3 305.1l-2.9 11.8M385.2 291.5l-2.1 9.2M425.4 302.2l-2.5 38.0M505.6 332.6l36.5 -1.0M474.1 307.2l-0.2 44.5M440.8 295.2l37.9 3.8M444.7 342.7l-1.6 9.7M414.8 318.8l-0.6 9.3M353.4 361.4l43.0 4.8M531.4 336.4l26.8 -0.9M398.9 318.2l32.3 22.7M458.0 335.3l-5.8 11.7M403.5 290.1l-6.7 43.3M514.4 313.7l-24.2 6.0M369.3 313.9l1.0 21.5M369.2 343.5l29.1 22.7M473.6 326.2l14.4 35.6M359.2 362.4l-8.5 33.6M492.4 347.4l-0.1 12.2M418.2 361.5l18.3 16.1M445.7 357.8l-1.2 28.3M378.9 296.3l-0.4 44.0M531.9 346.4l2.4 29.7M558.4 327.7l-6.3 43.7M403.4 313.9l-0.4 14.9M556.8 336.6l-2.8 8.3M458.2 346.4l-6.9 41.5M430.4 325.5l27.1 2.3M378.7 310.6l-0.4 22.5M397.6 353.6l-2.1 43.6M520.7 310.2l3.4 27.6" stroke="#fff" stroke-opacity=".04" stroke-width="1.3"/>
<path d="M497 431.500H858M496 455.500H858M560 380V528M620 375V536M700 394V517M780 414V498" stroke="#000" stroke-opacity=".26" stroke-width="1.300"/>
<path d="M520 170L760 196M510 214L700 232M640 131V270M730 158V248" stroke="#000" stroke-opacity=".14" stroke-width="1.300"/>
</g>
</g>
<g clip-path="url(#cp4)"><g filter="url(#nm2)">
<rect x="380" y="564" width="292" height="214" fill="#505050"/>
<g filter="url(#soft4)"><polygon points="505.6,582.8 534.4,582.8 646.7,661.3 646.7,680 535.5,758.8 505.6,758.8 483.3,752.2 454.4,739 423.3,712.2 403.3,683.3 401,665.6 414.4,639 437.8,619 463.3,601" fill="url(#g4rim)"/></g>
<g filter="url(#soft5)"><path d="M434.5 668C438 656 458 634 479 623C496 613 510 609 524 609C534 609 544 609 551 610.5C566 616 578 624 588 633.5C600 644 610 656 615 665C618 669 618.5 676 615 684.5C608 694 600 703 588 711.5C576 721 564 729 551 733.5C542 736.5 534 737.5 524 737C512 737 500 735 490 731C476 725 464 717 453.5 706.5C445 697 438 686 435 677Z" fill="url(#g4bowl2)"/></g>
<g clip-path="url(#cpBowl)">
<g filter="url(#soft6)"><path d="M437 700C450 716 480 738 524 740C560 740 590 720 612 692L640 700 560 770 430 760Z" fill="#000" fill-opacity=".22"/></g><g filter="url(#soft7)"><ellipse cx="528" cy="703" rx="62" ry="16" fill="#fff" fill-opacity=".16"/></g>
<g filter="url(#soft6)"><g clip-path="url(#cpRA)"><g filter="url(#soft8)"><path d="M451.4 663.7Q528.9 633.5 607.2 663.4" transform="translate(0 6)" fill="none" stroke="#fff" stroke-opacity=".8" stroke-width="26"/></g></g><g clip-path="url(#cpRB)"><g filter="url(#soft8)"><path d="M483.1 630.4Q526.7 598.5 587.0 638.9" transform="translate(0 5)" fill="none" stroke="#fff" stroke-opacity=".66" stroke-width="20"/></g></g></g>
<g filter="url(#soft4)" fill="none" stroke="#fff" stroke-linecap="round"><path d="M446 667.5Q528 631.5 613 667" stroke-opacity=".28" stroke-width="3"/><path d="M480 634.5Q524.5 594 594 644.5" stroke-opacity=".16" stroke-width="3"/></g>
</g>
</g></g>
</svg><!--NMAP_E-->
</div>
<div id="statusbar">
<div class="abs" style="left:0;top:0;width:48px;height:16px;background:#2c2c2c"></div>
<div class="abs" style="left:6px;top:2px;font-size:9.5px;line-height:13px;color:#f0f0f0">66,67%</div>
<div class="abs" style="left:48px;top:0;width:24px;height:16px;background:#494949"><svg class="abs" style="left:5px;top:1px" width="15" height="15" viewBox="0 0 15 15"><circle cx="7.5" cy="7.5" r="4.8" fill="#bdbdbd"/><path d="M6.5 7.5V4.8h2.2v2.7z M6.5 7.5h4v2h-4z" fill="#4a4a4a"/><path d="M7.3 5.6h1.4v2.7h2.5" fill="none" stroke="#e8e8e8" stroke-width="1"/></svg></div>
<div class="abs" style="left:72px;top:0;width:170px;height:16px;background:#505050"></div>
<div class="abs" style="left:117px;top:2px;font-size:9.5px;line-height:13px;color:#f0f0f0">Док: 3,00M/3,00M</div>
<div class="abs" style="left:242px;top:0;width:13px;height:16px;background:#484848;border-left:1px solid #3a3a3a"><svg class="abs" style="left:3px;top:3px" width="8" height="11"><path d="M0 0l6.5 5-6.5 5z" fill="#f4f4f4"/></svg></div>
</div>
<div id="docksep"></div><div id="dock"></div><div id="dockhead"><svg class="abs" style="left:26px;top:3px" width="9" height="6"><path d="M3.600 0L0 3l3.600 3zM8 0L4.400 3 8 6z" fill="#d8d8d8"/></svg><svg class="abs" style="left:66px;top:3px" width="9" height="6"><path d="M3.600 0L0 3l3.600 3zM8 0L4.400 3 8 6z" fill="#d8d8d8"/></svg></div>
<div class="pn" style="left:1362px;top:75px;width:37px;height:40px"><div class="abs" style="left:9px;top:3px;width:19px;height:3px;background:repeating-linear-gradient(90deg,#353535 0,#353535 1px,transparent 1px,transparent 2px)"></div></div>
<div class="pn" style="left:1362px;top:116px;width:37px;height:740px"></div>
<div class="pn" style="left:1402px;top:75px;width:37px;height:96px"><div class="abs" style="left:9px;top:3px;width:19px;height:3px;background:repeating-linear-gradient(90deg,#353535 0,#353535 1px,transparent 1px,transparent 2px)"></div></div>
<div class="pn" style="left:1402px;top:172px;width:37px;height:68px"><div class="abs" style="left:9px;top:3px;width:19px;height:3px;background:repeating-linear-gradient(90deg,#353535 0,#353535 1px,transparent 1px,transparent 2px)"></div></div>
<div class="pn" style="left:1402px;top:241px;width:37px;height:40px"><div class="abs" style="left:9px;top:3px;width:19px;height:3px;background:repeating-linear-gradient(90deg,#353535 0,#353535 1px,transparent 1px,transparent 2px)"></div></div>
<div class="pn" style="left:1402px;top:282px;width:37px;height:68px"><div class="abs" style="left:9px;top:3px;width:19px;height:3px;background:repeating-linear-gradient(90deg,#353535 0,#353535 1px,transparent 1px,transparent 2px)"></div></div>
<div class="pn" style="left:1402px;top:351px;width:37px;height:96px"><div class="abs" style="left:9px;top:3px;width:19px;height:3px;background:repeating-linear-gradient(90deg,#353535 0,#353535 1px,transparent 1px,transparent 2px)"></div></div>
<div class="pn" style="left:1402px;top:448px;width:37px;height:180px"><div class="abs" style="left:9px;top:3px;width:19px;height:3px;background:repeating-linear-gradient(90deg,#353535 0,#353535 1px,transparent 1px,transparent 2px)"></div></div>
<div class="pn" style="left:1402px;top:629px;width:37px;height:227px"></div>
<div class="abs" style="left:1439px;top:63px;width:1px;height:793px;background:#3a3a3a"></div>
<svg class="abs" style="left:1369.5px;top:87.5px" width="22" height="20" viewBox="0 0 22 20"><path d="M7 2l5 2.300v5.400L7 12 2 9.700V4.300z" fill="#8a8a8a" stroke="#c8c8c8" stroke-width="1.100"/><path d="M2 4.300L7 6.600l5-2.300M7 6.600V12" fill="none" stroke="#c8c8c8" stroke-width="1"/><rect x="14" y="2.500" width="5" height="3.500" fill="#c8c8c8"/><rect x="14" y="7.500" width="5" height="3.500" fill="#c8c8c8"/><rect x="2" y="14" width="17" height="4" fill="#c8c8c8"/><path d="M13.500 15h4l-2 2.300z" fill="#222"/></svg>
<svg class="abs" style="left:1410.5px;top:87.3px" width="22" height="22" viewBox="0 0 22 22"><circle cx="11" cy="11" r="5.600" fill="none" stroke="#c8c8c8" stroke-width="1.500"/><circle cx="11" cy="11" r="2" fill="#c8c8c8"/><path d="M20.50 11.00L1.50 11.00M17.72 17.72L4.28 4.28M11.00 20.50L11.00 1.50M4.28 17.72L17.72 4.28" stroke="#c8c8c8" stroke-width="1.200"/></svg>
<svg class="abs" style="left:1412.5px;top:117.0px" width="18" height="18" viewBox="0 0 18 18"><defs><linearGradient id="ginf" x1="0" y1="0" x2="0" y2="1"><stop offset="0" stop-color="#d8d8d8"/><stop offset="1" stop-color="#a8a8a8"/></linearGradient></defs><circle cx="9" cy="9" r="8.200" fill="url(#ginf)"/><circle cx="9" cy="5" r="1.700" fill="#555"/><rect x="7.600" y="8" width="2.800" height="6.500" fill="#555"/></svg>
<svg class="abs" style="left:1412.0px;top:149.0px" width="20" height="13" viewBox="0 0 20 13"><path d="M1 12.500V8l1.500-1.500 1 1.500 1.500-3 1 1.500L8 2l1 2.500 1-4 1 3.500 1.500-2 1 3.500 1.500-2.500 1 3 1 1.500 1 2.500v2.500z" fill="#c8c8c8"/></svg>
<svg class="abs" style="left:1410.5px;top:188.0px" width="22" height="16" viewBox="0 0 22 16"><path d="M1.500 9.500c-1-3 2.500-5 7-5.500l1.500-2.500c5-1 10.500 1.500 10.500 6s-4.500 7-9.500 7-8.500-2-9.500-5z" fill="#c8c8c8"/><circle cx="5.500" cy="9" r="1.600" fill="#555"/><circle cx="9.800" cy="11.800" r="1.500" fill="#555"/><circle cx="14.600" cy="11" r="1.500" fill="#555"/><circle cx="17.800" cy="8" r="1.400" fill="#555"/><circle cx="15.600" cy="4.800" r="1.300" fill="#555"/></svg>
<svg class="abs" style="left:1412.0px;top:216.0px" width="18" height="14" viewBox="0 0 18 14"><rect x="0.500" y="0.500" width="17" height="13" fill="#bdbdbd"/><rect x="1.500" y="2" width="4.500" height="4.500" fill="#222"/><rect x="7" y="2" width="4.500" height="4.500" fill="#4a4a4a"/><rect x="12.500" y="2" width="4.500" height="4.500" fill="#8c8c8c"/><rect x="1.500" y="7.500" width="4.500" height="4.500" fill="#7c7c7c"/><rect x="7" y="7.500" width="4.500" height="4.500" fill="#6a6a6a"/><rect x="12.500" y="7.500" width="4.500" height="4.500" fill="#4c4c4c"/></svg>
<svg class="abs" style="left:1412.5px;top:255.0px" width="18" height="18" viewBox="0 0 18 18"><circle cx="9" cy="9" r="7.500" fill="#c8c8c8" stroke="#9a9a9a" stroke-width="1.200"/><path d="M14.300 3.700A7.500 7.500 0 0 1 3.700 14.300z" fill="#555"/></svg>
<svg class="abs" style="left:1412.5px;top:296.0px" width="18" height="18" viewBox="0 0 18 18"><circle cx="9" cy="5.800" r="4.800" fill="#bdbdbd"/><circle cx="5.300" cy="11.600" r="4.800" fill="#d2d2d2"/><circle cx="12.700" cy="11.600" r="4.800" fill="#c4c4c4"/><path d="M9 7.500l3 5h-6z" fill="#666"/><circle cx="9" cy="9.800" r="1.800" fill="#444"/></svg>
<svg class="abs" style="left:1414.0px;top:326.2px" width="13" height="15" viewBox="0 0 13 15"><path d="M7 .500h5.500V2H11v12.500H9.500V2h-1v12.500H7V8A3.750 3.750 0 0 1 7 .500z" fill="#c8c8c8"/></svg>
<svg class="abs" style="left:1411.0px;top:365.5px" width="21" height="17" viewBox="0 0 21 17"><path d="M2 3h17" stroke="#c8c8c8" stroke-width="1.100"/><rect x="1" y="1" width="4" height="4" fill="#c8c8c8"/><rect x="8.500" y="1" width="4" height="4" fill="#c8c8c8"/><rect x="16" y="1" width="4" height="4" fill="#c8c8c8"/><path d="M4 13c0-6 3-10 6.500-10s6.500 4 6.500 10" fill="none" stroke="#c8c8c8" stroke-width="1.100"/><rect x="2.500" y="12.500" width="3" height="3" fill="#555" stroke="#c8c8c8"/><rect x="15.500" y="12.500" width="3" height="3" fill="#555" stroke="#c8c8c8"/></svg>
<svg class="abs" style="left:1411.5px;top:392.5px" width="20" height="19" viewBox="0 0 20 19"><path d="M10 6.500l9 5-9 5-9-5z" fill="#a4a4a4"/><path d="M10 1l9 5-9 5-9-5z" fill="#d0d0d0"/></svg>
<svg class="abs" style="left:1413.5px;top:421.0px" width="17" height="19" viewBox="0 0 17 19"><rect x="1.500" y="1.500" width="4" height="4" fill="none" stroke="#c8c8c8" stroke-width="1.200"/><rect x="1.500" y="7.500" width="4" height="4" fill="none" stroke="#c8c8c8" stroke-width="1.200"/><rect x="1" y="13" width="5" height="5" fill="#c8c8c8"/><path d="M9.500 15.500c5-1.500 5.500-7.500 2.500-11" fill="none" stroke="#c8c8c8" stroke-width="1.600"/><path d="M8.500 3l6-.500-1.500 5z" fill="#c8c8c8"/></svg>
<svg class="abs" style="left:1411.0px;top:461.5px" width="20" height="18" viewBox="0 0 20 18"><path d="M1 2h2M4 2h4M1 5h2M4 5h4M1 8h2M4 8h4" stroke="#e0e0e0" stroke-width="1.300"/><path d="M10.500 5.400a2.300 2.300 0 1 1 4.600 0c0 1.400-.9 1.800-.9 3v1.600h4.800v4H6v-4h4.800v-1.600c0-1.200-.9-1.600-.9-3z" fill="#c8c8c8"/><rect x="7" y="15.500" width="11.500" height="1.200" fill="#c8c8c8"/></svg>
<svg class="abs" style="left:1413.5px;top:491.8px" width="16" height="15" viewBox="0 0 16 15"><defs><linearGradient id="gpl" x1="0" y1="0" x2="0" y2="1"><stop offset="0" stop-color="#e0e0e0"/><stop offset="1" stop-color="#9c9c9c"/></linearGradient></defs><path d="M.500 .500l15 7-15 7z" fill="url(#gpl)"/></svg>
<svg class="abs" style="left:1412.0px;top:517.0px" width="18" height="22" viewBox="0 0 18 22"><path d="M3.500 1h13.500v13.500h-7v-6h-6.500z" fill="#bcbcbc"/><text x="0" y="19" font-family="Liberation Serif,serif" font-style="italic" font-size="13" fill="#e4e4e4">fx</text></svg>
<svg class="abs" style="left:1411.5px;top:546.5px" width="20" height="18" viewBox="0 0 20 18"><path d="M1 2.500c3 .500 5-1.500 7.500-1 1.500 .400 1.500 3 0 4-3 1.200-6.500 0-7.500-3z" fill="#c8c8c8"/><path d="M9 3.800h10" stroke="#c8c8c8" stroke-width="1.600"/><path d="M1 12.500h11" stroke="#c8c8c8" stroke-width="1.600"/><path d="M12 12.500c1-3 3.500-5 6.500-5.500 1.500 3 1.500 8-.5 10.500-3-.500-5-2-6-5z" fill="#c8c8c8"/></svg>
<svg class="abs" style="left:1412.5px;top:573.0px" width="17" height="20" viewBox="0 0 17 20"><rect x="4.500" y="11.500" width="8" height="8" fill="#c8c8c8"/><path d="M6 11.500L2.500 6c-1-2 0-4 .800-4.500L7 8v3.500zM8 11.500V3c0-2 2-2 2 0v8.500zM10.500 11.500l1-5c.500-2 4-3 5-1.500l-4 3.500-.500 3z" fill="#c8c8c8"/></svg>
<svg class="abs" style="left:1413.0px;top:602.5px" width="16" height="18" viewBox="0 0 16 18"><text x="0" y="15.500" font-family="Liberation Sans,sans-serif" font-size="17" fill="#cfcfcf">A</text><rect x="13" y="1" width="1.200" height="16.500" fill="#cfcfcf"/></svg>
<div id="taskbar">
<div class="abs" style="left:0;top:1px;width:1440px;height:1px;background:#fff"></div>
<div class="b3" style="left:2px;width:51px"></div>
<svg style="left:4px;top:13px" width="17" height="17" viewBox="0 0 17 17">
<path d="M2.500 2.800c2-1.200 3.600-1 5.400 0l-1.300 5c-1.800-1-3.400-1.200-5.400 0z" fill="#e8542c"/>
<path d="M8.600 3.200c1.800 1 3.600 1 5.600-.200l-1.300 5c-2 1.200-3.800 1.200-5.600.200z" fill="#7cb83e"/>
<path d="M1 8.800c2-1.200 3.600-1 5.400 0l-1.300 5c-1.800-1-3.400-1.200-5.400 0z" fill="#3c8fe0"/>
<path d="M7 9.200c1.800 1 3.600 1 5.600-.200l-1.300 5c-2 1.200-3.800 1.200-5.600.200z" fill="#f6b92c"/></svg>
<div class="abs" style="left:21px;top:15px;font-size:11.800px;line-height:14px;font-weight:bold;color:#000;letter-spacing:-.1px">Пуск</div>
<div class="b3" style="left:62px"></div>
<svg style="left:71px;top:8px" width="30" height="30" viewBox="-15 -15 30 30">
<circle r="14.500" fill="#dd4b3e"/>
<path d="M0 0L-12.560 -7.250A14.500 14.500 0 0 0 0 14.500z" fill="#1da462" transform="rotate(0)"/>
<path d="M0 0L-12.560 -7.250A14.500 14.500 0 0 0 -2.500 14.280L6 3.500z" fill="#1da462"/>
<path d="M0 0h0L6 3.500 -2.500 14.280A14.500 14.500 0 0 0 13.500 -5.300H0z" fill="#ffcd46"/>
<path d="M13.500 -5.300A14.500 14.500 0 0 0 -12.560 -7.250L-6 3.500 0 -6.500z" fill="#dd4b3e"/>
<circle r="6.600" fill="#fff"/><circle r="5.300" fill="#4a8af4"/></svg>
<div class="b3" style="left:112px"></div>
<svg style="left:119px;top:9px" width="34" height="30" viewBox="0 0 34 30">
<path d="M1 3.500q0-1.500 1.500-1.500h10l1.500 2h16.500q1.500 0 1.500 1.500v20.500h-31z" fill="#f0d88c" stroke="#c8a850" stroke-width=".800"/>
<rect x="4.500" y="2.800" width="7" height="2" fill="#fff"/><rect x="5" y="3" width="2.500" height="1.600" fill="#1cb02c"/>
<rect x="12.500" y="4.800" width="7" height="2" fill="#fff"/><rect x="13" y="5" width="2.500" height="1.600" fill="#d8281c"/>
<rect x="20.500" y="6.600" width="7" height="2" fill="#fff"/><rect x="21" y="6.800" width="2.500" height="1.600" fill="#1c8ce8"/>
<path d="M1 9.500h32v16.500h-32z" fill="#fbeaa8" stroke="#d4b458" stroke-width=".800"/>
<path d="M5.500 29v-9.500q0-3 3-3h17q3 0 3 3v9.500h-6.500v-6.500h-10v6.500z" fill="#6cc4f0" stroke="#2c8cd0" stroke-width=".900" opacity=".920"/>
<path d="M6.500 19.500q0-2 2-2h17q2 0 2 2v1.500h-21z" fill="#c8ecff" opacity=".800"/>
<path d="M7.500 12.500v9M3 17h9M4.500 14l6 6M10.500 14l-6 6" stroke="#fff" stroke-width=".700" opacity=".900"/></svg>
<svg style="left:170px;top:10px" width="32" height="28" viewBox="170 866 32 28">
<defs><linearGradient id="gwm" x1="0" y1="0" x2="0" y2="1"><stop offset="0" stop-color="#f89a2c"/><stop offset="1" stop-color="#f06410"/></linearGradient></defs>
<path d="M194 869.500h2.500q1.500 0 1.500 1.500v19q0 1.500-1.500 1.500h-2.500z" fill="#c4e2f6" stroke="#4c9ad0" stroke-width=".900"/>
<path d="M192 868.900h2.800q1.400 0 1.400 1.400v20.500q0 1.400-1.400 1.400h-2.800z" fill="#c4e2f6" stroke="#4c9ad0" stroke-width=".900"/>
<rect x="172.400" y="868.400" width="21.600" height="24" rx="1" fill="#acd6f2" stroke="#4a9ad2" stroke-width=".900"/>
<rect x="173.400" y="869.400" width="1.600" height="22" fill="#cfe8f8" opacity=".800"/>
<circle cx="182.700" cy="880" r="8.700" fill="url(#gwm)"/>
<path d="M178.700 874v11.800l10-6z" fill="#fff"/></svg>
<svg style="left:219px;top:6px" width="36" height="36" viewBox="0 0 36 36">
<path d="M1.500 16.500L7 11.500H22L17.500 16.500Z" fill="#9ff" stroke="#008080" stroke-width=".600"/>
<path d="M17.500 16.500L22 11.500V28L17.500 33Z" fill="#008080"/>
<rect x="1.500" y="16.500" width="16" height="16.500" fill="#9ff"/>
<path d="M6.800 16.500V33M12.200 16.500V33M1.500 22H17.500M1.500 27.500H17.500M1.500 16.500V33" stroke="#008080" stroke-width="1"/>
<path d="M7.500 12.500L21.500 11.800V21L17.500 27H12.300V21.500H7.500Z" fill="#008080"/>
<path d="M8.500 14l4.500.300-.5 5zM14.500 12.600l5 .200-1 4.500zM13.300 20.500l4.200.500v5z" fill="#e4ffff"/>
<path d="M7.500 14.500V21.500H12.300V27H17.500" fill="none" stroke="#000" stroke-width="1.200"/>
<path d="M1 33.300H17.500L22 28.500" fill="none" stroke="#000" stroke-width="1"/>
<path d="M19.400 1.800l3.200 3.600-3.200 3.600-3.200-3.600z" fill="#9ff" stroke="#008080" stroke-width="1"/><path d="M19.400 9l3.200-3.600" stroke="#004c4c" stroke-width="1.400"/>
<path d="M28.500 4.600l3.600 3-3.600 3-3.600-3z" fill="#9ff" stroke="#008080" stroke-width="1"/><path d="M28.500 10.600l3.600-3" stroke="#004c4c" stroke-width="1.400"/>
<path d="M25 13l3.400 2.600L25 18.200l-3.400-2.600z" fill="#9ff" stroke="#008080" stroke-width="1"/>
<g transform="translate(19 18)"><path d="M6.300 0c2 1.200 3.900 1.700 6.100 1.700 0 6-1.400 10.300-6.100 13C1.600 12 .200 7.700.200 1.700 2.400 1.700 4.300 1.200 6.300 0z" fill="#e8e8e8" stroke="#9a9a9a" stroke-width=".800"/>
<path d="M6.300 1.700v5.600H1.300c-.2-1.400-.3-2.900-.3-4.500 2 0 3.700-.400 5.300-1.100z" fill="#2c78dc"/><path d="M6.300 1.700c1.600.700 3.300 1.100 5.300 1.100 0 1.600-.1 3.100-.3 4.500H6.300z" fill="#f8d428"/>
<path d="M1.300 7.300h5v6c-2.900-1.800-4.400-3.800-5-6z" fill="#f8d428"/><path d="M6.300 7.300h5c-.6 2.200-2.100 4.200-5 6z" fill="#2c78dc"/></g></svg>
<svg style="left:270px;top:6px" width="34" height="34" viewBox="270 862 34 34">
<defs><linearGradient id="gpu" x1="0" y1="0" x2="0" y2="1"><stop offset="0" stop-color="#c418cc"/><stop offset="1" stop-color="#6c0874"/></linearGradient></defs>
<path fill-rule="evenodd" fill="url(#gpu)" d="M286 866.400a12.900 12.900 0 1 0 .01 0zM286 870.400a10.300 10.300 0 1 1-.01 0z"/>
<path d="M278.700 877l7.500 13.500 7.300-13.500" fill="none" stroke="#7c0c88" stroke-width="2.100"/>
<circle cx="286" cy="874.200" r="1.700" fill="#9c10a8"/><path d="M284.100 877.600h3.800l-1.800 5.800z" fill="#8c0c98"/>
<path d="M273.8 865.1l2.600 3.800-2.600 3.800-2.600-3.800zM298.4 865.1l2.600 3.800-2.600 3.800-2.600-3.800zM273.8 885.3000000000001l2.600 3.800-2.600 3.800-2.600-3.800zM298.4 885.3000000000001l2.600 3.800-2.600 3.800-2.600-3.800z" fill="url(#gpu)"/></svg>
<svg style="left:320px;top:8px" width="32" height="30" viewBox="320 864 32 30">
<path d="M327.500 879v-2.500a8.600 8.600 0 0 1 17.200 0v2.500" fill="none" stroke="#0a0a84" stroke-width="1.700"/>
<rect x="329.20" y="878.5" width="1.500" height="9.2" rx=".700" fill="#ffdc08"/><rect x="330.56" y="876.0" width="1.500" height="13.9" rx=".700" fill="#ffdc08"/><rect x="331.92" y="874.7" width="1.500" height="16.3" rx=".700" fill="#ffdc08"/><rect x="333.28" y="875.7" width="1.500" height="14.4" rx=".700" fill="#ffdc08"/><rect x="334.64" y="874.1" width="1.500" height="17.4" rx=".700" fill="#ffdc08"/><rect x="336.00" y="875.1" width="1.500" height="15.5" rx=".700" fill="#ffdc08"/><rect x="337.36" y="874.3" width="1.500" height="17.0" rx=".700" fill="#ffdc08"/><rect x="338.72" y="875.5" width="1.500" height="14.8" rx=".700" fill="#ffdc08"/><rect x="340.08" y="874.9" width="1.500" height="15.9" rx=".700" fill="#ffdc08"/><rect x="341.44" y="877.5" width="1.500" height="11.1" rx=".700" fill="#ffdc08"/><rect x="329.20" y="881.5" width="1.500" height="4.8" rx=".700" fill="#ff9408"/><rect x="330.56" y="880.2" width="1.500" height="7.1" rx=".700" fill="#ff9408"/><rect x="331.92" y="879.6" width="1.500" height="8.4" rx=".700" fill="#ff9408"/><rect x="333.28" y="880.1" width="1.500" height="7.4" rx=".700" fill="#ff9408"/><rect x="334.64" y="879.3" width="1.500" height="8.9" rx=".700" fill="#ff9408"/><rect x="336.00" y="879.8" width="1.500" height="8.0" rx=".700" fill="#ff9408"/><rect x="337.36" y="879.4" width="1.500" height="8.7" rx=".700" fill="#ff9408"/><rect x="338.72" y="880.0" width="1.500" height="7.6" rx=".700" fill="#ff9408"/><rect x="340.08" y="879.7" width="1.500" height="8.2" rx=".700" fill="#ff9408"/><rect x="341.44" y="881.0" width="1.500" height="5.7" rx=".700" fill="#ff9408"/><rect x="329.20" y="883.1" width="1.500" height="1.8" fill="#f02808"/><rect x="330.56" y="882.6" width="1.500" height="2.7" fill="#f02808"/><rect x="331.92" y="882.4" width="1.500" height="3.2" fill="#f02808"/><rect x="333.28" y="882.6" width="1.500" height="2.8" fill="#f02808"/><rect x="334.64" y="882.3" width="1.500" height="3.4" fill="#f02808"/><rect x="336.00" y="882.5" width="1.500" height="3.0" fill="#f02808"/><rect x="337.36" y="882.3" width="1.500" height="3.3" fill="#f02808"/><rect x="338.72" y="882.6" width="1.500" height="2.9" fill="#f02808"/><rect x="340.08" y="882.5" width="1.500" height="3.1" fill="#f02808"/><rect x="341.44" y="882.9" width="1.500" height="2.2" fill="#f02808"/>
<path d="M328.700 876.500v13.200h-1.500c-3 0-5.200-3-5.200-6.600s2.200-6.600 5.200-6.600z" fill="#1010b0"/>
<path d="M343.400 876.500v13.200h1.500c3 0 5.200-3 5.200-6.600s-2.200-6.600-5.200-6.600z" fill="#1010b0"/>
<rect x="327.300" y="876" width="1.500" height="14" fill="#06064c"/><rect x="343.300" y="876" width="1.500" height="14" fill="#06064c"/></svg>
<svg style="left:369px;top:6px" width="36" height="36" viewBox="0 0 36 36">
<g fill="#d8a4b0" stroke="#9c7880" stroke-width=".600" opacity=".750"><path d="M20 14l1.500-10.500c.2-1.400 2-1.200 2 .200l-.5 10.300zM23 15l2.500-9c.4-1.300 2.100-.800 1.900.500l-1.900 9.500zM26 16.500l3-7c.6-1.200 2.200-.600 1.800.700l-2.500 8z"/></g>
<path d="M14.500 35l-1.500-8c-2-.5-3.500-2-4.500-4l-5.500-7.500c-.8-1.300.8-2.400 1.900-1.400l5 4.500-1.900-12.800c-.2-1.500 1.800-1.900 2.200-.400l2.600 10-.4-12.300c0-1.500 2.100-1.600 2.300-.100l1.500 12 1-10.500c.200-1.500 2.200-1.300 2.200.200l-.2 11.300 2.300-7c.5-1.400 2.400-.900 2.100.600l-1.800 9.900c-.2 4-1 6-2.300 8l.5 7.500z" fill="#f6c8d2" stroke="#b08890" stroke-width=".700"/>
<path d="M12 9l.8 8M15.800 7l.5 9M19.200 8.500l-.2 8" stroke="#c898a4" stroke-width=".600" fill="none"/>
<g transform="translate(18.500 17.500)"><path d="M6.500 0c2 1.200 4 1.800 6.300 1.800 0 6-1.500 10.500-6.300 13.200C1.700 12.300.200 7.800.200 1.800 2.500 1.800 4.500 1.200 6.500 0z" fill="#e8e8e8" stroke="#8c8c8c" stroke-width=".800"/>
<path d="M6.500 1.800v5.700H1.300c-.2-1.400-.3-3-.3-4.600 2 0 3.800-.400 5.500-1.100z" fill="#2c74d8"/><path d="M6.500 1.800c1.700.700 3.500 1.100 5.500 1.100 0 1.600-.1 3.200-.3 4.600H6.500z" fill="#f8d020"/>
<path d="M1.300 7.500h5.200v6c-3-1.800-4.600-3.800-5.200-6z" fill="#f8d020"/><path d="M6.500 7.500h5.200c-.6 2.200-2.200 4.200-5.200 6z" fill="#2c74d8"/></g></svg>
<div class="b3 dn" style="left:412px"></div>
<div class="abs" style="left:422px;top:8px;width:28px;height:26px;background:#26215c;border:2px solid #7cb8f0;box-shadow:0 1px 2px rgba(0,0,0,.4)"></div>
<div class="abs" style="left:426px;top:10px;width:22px;font-size:18px;line-height:22px;font-weight:bold;color:#8cc8fc;transform:scaleX(.86);transform-origin:0 0;letter-spacing:-.3px">Ps</div>
<svg style="left:468px;top:7px" width="36" height="30" viewBox="468 863 36 30">
<g transform="translate(.6 .8)" opacity=".55" fill="none" stroke="#4a4638" stroke-linecap="round"><circle cx="490.400" cy="879.800" r="8.600" stroke-width="4.200"/><path d="M486.500 866.600L495 871.600M476 872.300H489M472 884L482 876.500" stroke-width="3.300"/></g>
<g fill="none" stroke="#ff8a1e" stroke-linecap="round"><path d="M486.500 866.600L495 871.600M476 872.300H489M472 884L482 876.500" stroke-width="3.300"/><circle cx="490.400" cy="879.800" r="8.600" stroke-width="4.200" fill="#fff"/></g>
<circle cx="490.200" cy="879.600" r="4" fill="#0a4c90"/></svg>
<div class="b3" style="left:512px"></div>
<svg style="left:520px;top:7px" width="32" height="32" viewBox="520 863 32 32">
<defs><linearGradient id="gbn" x1="0" y1="0" x2="0" y2="1"><stop offset="0" stop-color="#3a4e86"/><stop offset=".45" stop-color="#1c2a50"/><stop offset="1" stop-color="#10182e"/></linearGradient></defs>
<rect x="520.500" y="863.500" width="31" height="31" rx="3.500" fill="url(#gbn)" stroke="#05070e" stroke-width="1"/>
<g fill="none" stroke="#0a9cec" stroke-width="2"><ellipse cx="531.800" cy="878.100" rx="11" ry="3.100" transform="rotate(95 531.800 878.100)"/><ellipse cx="540.400" cy="877.600" rx="9.300" ry="3" transform="rotate(30 540.400 877.600)"/><ellipse cx="536.800" cy="883.100" rx="11.200" ry="3.100" transform="rotate(-22 536.800 883.100)"/></g>
<g fill="none" stroke="#3cc4ff" stroke-width=".800"><ellipse cx="531.800" cy="878.100" rx="11" ry="3.100" transform="rotate(95 531.800 878.100)"/><ellipse cx="540.400" cy="877.600" rx="9.300" ry="3" transform="rotate(30 540.400 877.600)"/><ellipse cx="536.800" cy="883.100" rx="11.200" ry="3.100" transform="rotate(-22 536.800 883.100)"/></g></svg>
<div class="b3" style="left:562px;width:40px;border-right-color:#808080;box-shadow:inset 1px 1px 0 #ece9e2"></div>
<div class="abs" style="left:602px;top:4px;width:4px;height:38px;border-right:1px solid #808080;border-bottom:1px solid #404040;border-top:1px solid #fff"></div><div class="abs" style="left:606px;top:4px;width:4px;height:38px;border-right:1px solid #404040;border-bottom:1px solid #404040;border-top:1px solid #fff"></div>
<svg style="left:566px;top:7px" width="32" height="32" viewBox="-16 -15.800 32 32">
<g fill="#12be12" stroke="#0a8e0a" stroke-width=".600"><path d="M6.30 0.00Q11.39 -1.60 7.95 -12.72Q8.27 -6.46 5.22 -3.52Z"/><path d="M5.10 3.70Q10.15 5.40 13.91 -5.62Q10.49 -0.37 6.30 0.22Z"/><path d="M1.95 5.99Q5.04 10.34 14.55 3.63Q8.70 5.87 4.96 3.88Z"/><path d="M-1.95 5.99Q-2.00 11.33 9.64 11.49Q3.59 9.87 1.74 6.06Z"/><path d="M-5.10 3.70Q-8.27 7.99 1.05 14.96Q-2.89 10.09 -2.15 5.92Z"/><path d="M-6.30 0.00Q-11.39 1.60 -7.95 12.72Q-8.27 6.46 -5.22 3.52Z"/><path d="M-5.10 -3.70Q-10.15 -5.40 -13.91 5.62Q-10.49 0.37 -6.30 -0.22Z"/><path d="M-1.95 -5.99Q-5.04 -10.34 -14.55 -3.63Q-8.70 -5.87 -4.96 -3.88Z"/><path d="M1.95 -5.99Q2.00 -11.33 -9.64 -11.49Q-3.59 -9.87 -1.74 -6.06Z"/><path d="M5.10 -3.70Q8.27 -7.99 -1.05 -14.96Q2.89 -10.09 2.15 -5.92Z"/></g>
<circle r="7.600" fill="#10b010"/><circle r="5.200" fill="#143214"/>
<path d="M-2.600 -3.600a3.500 3.500 0 0 0 1.200 5.600v2.600h2.800v-2.600a3.500 3.500 0 0 0 1.200-5.600v2.600h-1.300l-.5-.9h-1.600l-.5.900h-1.300z" fill="#3cf03c"/></svg>
<div class="abs" style="left:1232px;top:14px;font-size:12.500px;line-height:14px;color:#000;transform:scaleX(.87);transform-origin:0 0">EN</div>
<div class="abs" style="left:1252px;top:9px;width:2px;height:24px;border-left:1px solid #fff;border-right:1px solid #808080"></div>
<div class="abs" style="left:1256px;top:4px;width:182px;height:38px;border:1px solid;border-color:#808080 #fff #fff #808080"></div>
<svg style="left:1262px;top:16px" width="8" height="10" viewBox="0 0 8 10"><path d="M.800 4.200L4 1.200l3.200 3M.800 8.700L4 5.700l3.200 3" fill="none" stroke="#000" stroke-width="1.500"/></svg>
<svg style="left:1278px;top:13px" width="18" height="18" viewBox="0 0 18 18"><rect x="1.500" y="1" width="1.800" height="16" fill="#e8e8e8" stroke="#888" stroke-width=".600"/><path d="M3.500 2c3-1.500 5 1 8.500-.500v8c-3.500 1.500-5.500-1-8.500.500z" fill="#f4f4f4" stroke="#999" stroke-width=".700"/><circle cx="12" cy="12.500" r="4.800" fill="#e02020" stroke="#fff" stroke-width=".800"/><path d="M9.800 10.300l4.400 4.400M14.200 10.300l-4.400 4.400" stroke="#fff" stroke-width="1.500"/></svg>
<svg style="left:1302px;top:13px" width="18" height="18" viewBox="0 0 18 18"><rect x="5.500" y="4" width="11" height="9.500" fill="#d8d8d8" stroke="#777" stroke-width=".900"/><rect x="7" y="5.500" width="8" height="6.500" fill="#b4b8bc"/><path d="M8 15.800h6.500" stroke="#777" stroke-width="1.300"/><path d="M3 1v3M6 1v3" stroke="#666" stroke-width="1"/><rect x="1.800" y="3.500" width="5.400" height="4" fill="#f0f0f0" stroke="#666" stroke-width=".800"/><path d="M4.500 7.500v8.500h4" fill="none" stroke="#666" stroke-width="1.200"/></svg>
<svg style="left:1326px;top:13px" width="18" height="18" viewBox="0 0 18 18"><path d="M1.500 6.500h3l4-4.500v14l-4-4.500h-3z" fill="#e4e4e4" stroke="#888" stroke-width=".800"/><path d="M10.500 6.300a4 4 0 0 1 0 5.400M12.500 4.300a7 7 0 0 1 0 9.400M14.500 2.500a9.500 9.500 0 0 1 0 13" fill="none" stroke="#9a9a9a" stroke-width="1"/></svg>
<div class="abs" style="left:1350px;top:9px;width:70px;text-align:center;font-size:11px;line-height:13px;color:#000">17:49</div>
<div class="abs" style="left:1350px;top:25px;width:70px;text-align:center;font-size:11px;line-height:13px;color:#000">26.01.2017</div>
<svg style="left:1420px;top:17px" width="16" height="13" viewBox="0 0 16 13"><rect x=".500" y=".500" width="15" height="11.500" fill="#2c7ce0" stroke="#9cc4f4" stroke-width="1"/><rect x="1" y="9" width="14" height="2.500" fill="#1c2c50"/><rect x="1.500" y="9.500" width="2" height="1.500" fill="#f0a020"/></svg>
</div>
</body>
</html>
